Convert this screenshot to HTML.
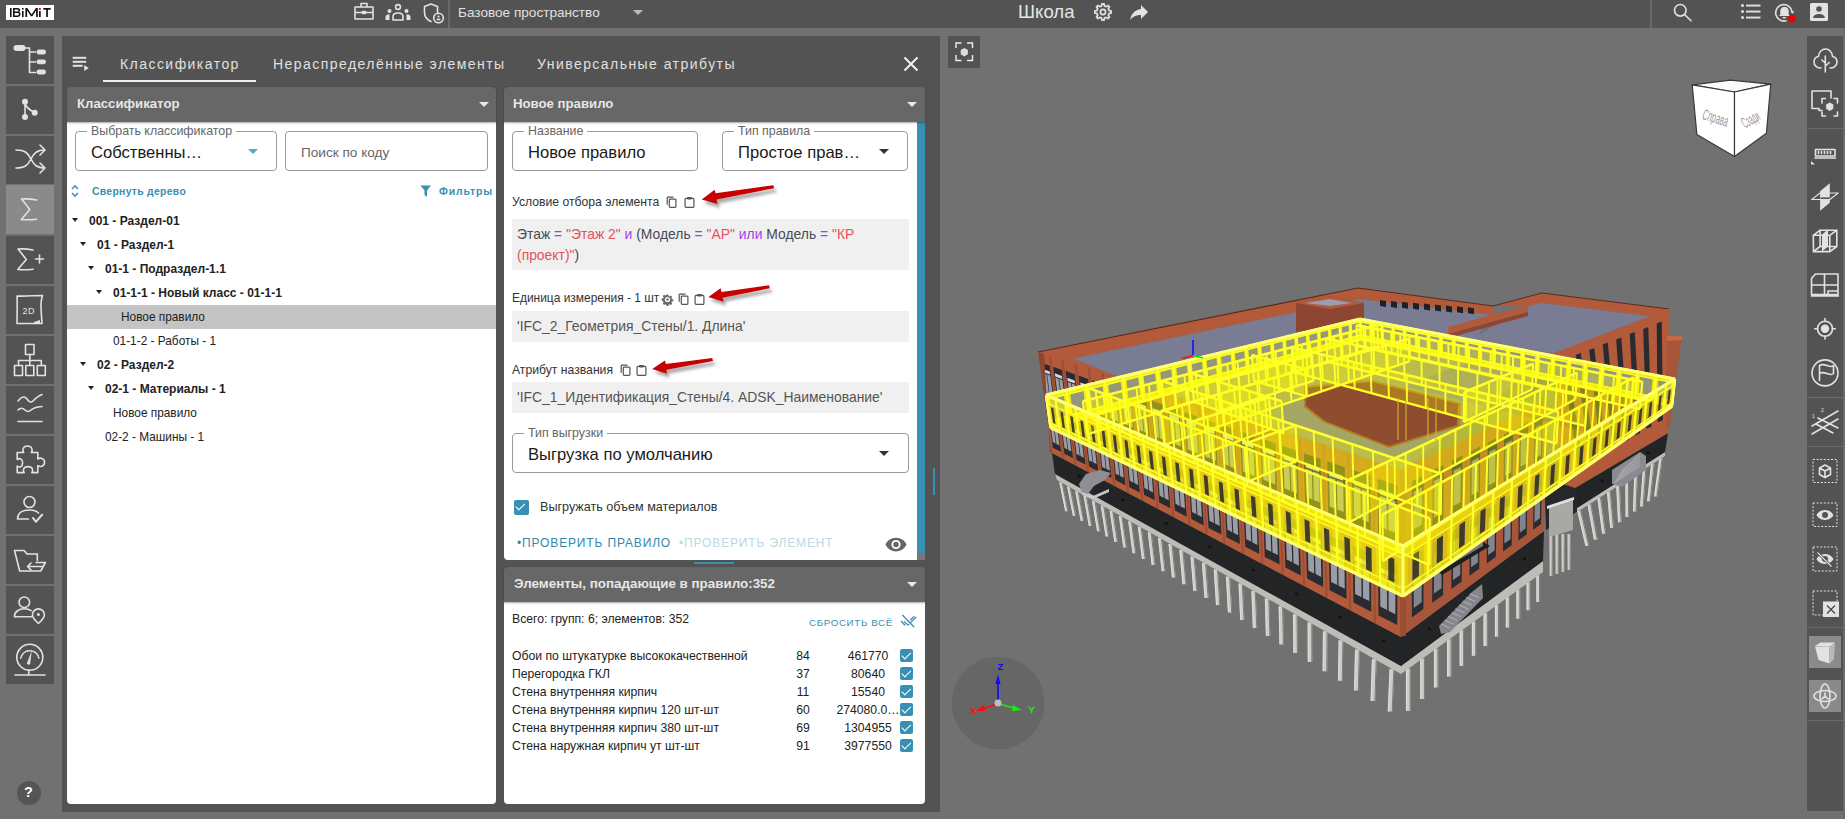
<!DOCTYPE html>
<html><head><meta charset="utf-8">
<style>
*{box-sizing:border-box;margin:0;padding:0}
html,body{width:1845px;height:819px;overflow:hidden;background:#717171;font-family:"Liberation Sans",sans-serif;position:relative}
.a{position:absolute}
.t{position:absolute;white-space:nowrap;line-height:1}
#top{left:0;top:0;width:1845px;height:28px;background:#535353}
.lb{position:absolute;left:6px;width:48px;height:48px;background:#535353}
.lb.sel{background:#8a8a8a}
#cont{left:62px;top:36px;width:878px;height:776px;background:#535353}
.ph{position:absolute;height:35px;background:#676767;border-radius:4px 4px 0 0;z-index:2;box-shadow:0 1px 2px rgba(0,0,0,0.35)}
.ph .t{color:#e6e6e6;font-weight:bold;font-size:13.2px}
.pb{position:absolute;background:#fff;border-radius:0 0 4px 4px}
.tab{color:#e0e0e0;font-size:14px;letter-spacing:1.45px}
svg{position:absolute;overflow:visible}
.ic{stroke:#e2e2e2;fill:none;stroke-width:1.6;stroke-linecap:round;stroke-linejoin:round}
.icf{fill:#e2e2e2;stroke:none}
.fld{position:absolute;border:1px solid #9a9a9a;border-radius:4px;background:#fff}
.lbl{position:absolute;background:#fff;color:#666;font-size:12.4px;line-height:1;padding:0 4px 0 4px;white-space:nowrap;margin-top:1px}
.val{position:absolute;color:#1a1a1a;font-size:16.6px;line-height:1;white-space:nowrap;margin-top:1px}
.tr{position:absolute;font-size:11.85px;color:#222;line-height:1;white-space:nowrap}
.tr.b{font-weight:bold;font-size:12px}
.arr{position:absolute;width:0;height:0;border-left:3.5px solid transparent;border-right:3.5px solid transparent;border-top:4px solid #222}
.lab{position:absolute;font-size:12.2px;color:#333;line-height:1;white-space:nowrap}
.code{position:absolute;background:#f0f0f0;left:512px;width:397px}
.ct{position:absolute;font-size:13.9px;color:#555;line-height:1;white-space:nowrap}
.row{position:absolute;font-size:12.2px;color:#222;line-height:1;white-space:nowrap}
.cb{position:absolute;width:13px;height:13px;background:#3a90b4;border-radius:2px}
.cb:after{content:"";position:absolute;left:4.2px;top:1.2px;width:3.6px;height:7.5px;border:solid #fff;border-width:0 1.8px 1.8px 0;transform:rotate(45deg)}
</style></head><body>
<!-- TOP BAR -->
<div id="top" class="a"></div>
<div class="a" style="left:6px;top:5px;width:48px;height:15px;background:#fff"></div>
<svg style="left:0;top:0" width="60" height="28">
  <g fill="#111">
    <rect x="10" y="8" width="1.6" height="9"/>
    <path d="M13 8h4.2c2 0 3 1 3 2.2 0 1-.6 1.6-1.4 1.9 1 .3 1.7 1 1.7 2.1 0 1.6-1.2 2.8-3.2 2.8H13zM14.6 9.4v2.2h2.4c.9 0 1.5-.4 1.5-1.1s-.6-1.1-1.5-1.1zM14.6 12.9v2.7h2.6c1 0 1.7-.5 1.7-1.35S18.2 12.9 17.2 12.9z"/>
    <rect x="22" y="11" width="1.6" height="6"/>
    <rect x="22" y="8" width="1.6" height="1.6"/>
    <path d="M25.4 17V8h1.9l4.3 6.6 4.3-6.6h1.9v9h-1.7v-6.4l-3.8 5.6h-1.4l-3.8-5.6V17z"/>
    <rect x="39" y="11" width="1.7" height="6"/>
    <rect x="43.3" y="8" width="7.4" height="1.7"/>
    <rect x="46.2" y="8" width="1.7" height="9"/>
  </g>
  <rect x="38.9" y="8" width="1.9" height="1.9" fill="#e00"/>
</svg>
<!-- briefcase -->
<svg style="left:354px;top:2px" width="20" height="18" viewBox="0 0 20 18">
  <path class="ic" d="M1 5h18v12H1zM1 10.5h18M7 5V1.5h6V5M8.5 9.5h3v2h-3z" stroke-width="1.5"/>
</svg>
<!-- people -->
<svg style="left:385px;top:3px" width="26" height="18" viewBox="0 0 26 18">
  <circle class="ic" cx="13" cy="4" r="2.4" stroke-width="1.5"/>
  <circle class="icf" cx="4.5" cy="8" r="2"/>
  <circle class="icf" cx="21.5" cy="8" r="2"/>
  <path class="ic" d="M8 17v-3.5c0-2 2-3.5 5-3.5s5 1.5 5 3.5V17z" stroke-width="1.6"/>
  <path class="icf" d="M0.5 17v-2.5c0-2 1.5-3.2 4-3.2v5.7zM25.5 17v-2.5c0-2-1.5-3.2-4-3.2v5.7z"/>
</svg>
<!-- shield -->
<svg style="left:423px;top:3px" width="22" height="21" viewBox="0 0 22 21">
  <path class="ic" d="M8 1L1.5 3.5v6c0 4 3 7.5 6.5 9M8 1l6.5 2.5v7" stroke-width="1.5"/>
  <circle class="ic" cx="15.5" cy="15" r="4.8" stroke-width="1.5"/>
  <circle class="icf" cx="15.5" cy="13.6" r="1.1"/>
  <path class="icf" d="M13.2 17.3c.3-1.2 1.2-1.8 2.3-1.8s2 .6 2.3 1.8z"/>
</svg>
<div class="a" style="left:448px;top:0;width:2px;height:28px;background:#6a6a6a"></div>
<div class="t" style="left:458px;top:6px;font-size:13.6px;color:#e0e0e0">Базовое пространство</div>
<div class="a" style="left:633px;top:10px;width:0;height:0;border-left:5px solid transparent;border-right:5px solid transparent;border-top:5px solid #bbb"></div>
<div class="t" style="left:1018px;top:3px;font-size:18.6px;color:#e6e6e6">Школа</div>
<!-- gear -->
<svg style="left:1093px;top:2px" width="20" height="20" viewBox="0 0 20 20">
  <path d="M16.15 8.63 L18.12 8.86 L18.12 11.14 L16.15 11.37 L15.32 13.38 L16.55 14.93 L14.93 16.55 L13.38 15.32 L11.37 16.15 L11.14 18.12 L8.86 18.12 L8.63 16.15 L6.62 15.32 L5.07 16.55 L3.45 14.93 L4.68 13.38 L3.85 11.37 L1.88 11.14 L1.88 8.86 L3.85 8.63 L4.68 6.62 L3.45 5.07 L5.07 3.45 L6.62 4.68 L8.63 3.85 L8.86 1.88 L11.14 1.88 L11.37 3.85 L13.38 4.68 L14.93 3.45 L16.55 5.07 L15.32 6.62Z" fill="none" stroke="#e2e2e2" stroke-width="1.7" stroke-linejoin="round"/>
  <circle cx="10" cy="10" r="2.6" fill="none" stroke="#e2e2e2" stroke-width="1.7"/>
</svg>
<!-- share -->
<svg style="left:1129px;top:4px" width="20" height="17" viewBox="0 0 20 17">
  <path fill="#e2e2e2" d="M12 1v4C5 6 2 11 1 16c2.5-3.5 6-5.1 11-5.1V15l7-7z"/>
</svg>
<div class="a" style="left:1650px;top:0;width:2px;height:28px;background:#6a6a6a"></div>
<!-- search -->
<svg style="left:1673px;top:3px" width="20" height="19" viewBox="0 0 20 19">
  <circle class="ic" cx="7.3" cy="7.3" r="5.8" stroke-width="1.9"/>
  <path class="ic" d="M11.5 11.5l6.5 6.3" stroke-width="2"/>
</svg>
<!-- list -->
<svg style="left:1741px;top:4px" width="20" height="16" viewBox="0 0 20 16">
  <circle class="icf" cx="1.5" cy="1.5" r="1.5"/><circle class="icf" cx="1.5" cy="7.5" r="1.5"/><circle class="icf" cx="1.5" cy="13.5" r="1.5"/>
  <rect class="icf" x="5" y="0.6" width="14.5" height="1.9"/><rect class="icf" x="5" y="6.6" width="14.5" height="1.9"/><rect class="icf" x="5" y="12.6" width="14.5" height="1.9"/>
</svg>
<!-- bell -->
<svg style="left:1774px;top:3px" width="22" height="20" viewBox="0 0 22 20">
  <path class="ic" d="M18 8.5A8.2 8.2 0 1 0 12 17.8" stroke-width="1.7"/>
  <path class="icf" d="M16.5 8.5h4l-2 2.3z"/>
  <path class="icf" d="M9.5 4c-2 .4-3.2 2-3.2 4v3.5l-1.3 1.5h11l-1.3-1.5V8c0-2-1.2-3.6-3.2-4zM8.5 14h3.5c0 1-.8 1.6-1.75 1.6S8.5 15 8.5 14z"/>
  <circle cx="18" cy="15.6" r="3.9" fill="#e00"/>
</svg>
<!-- person -->
<svg style="left:1810px;top:3px" width="18" height="18" viewBox="0 0 18 18">
  <rect x="0" y="0" width="18" height="18" rx="1.5" fill="#e2e2e2"/>
  <circle cx="9" cy="6" r="2.8" fill="#535353"/>
  <path d="M3.2 14.5c0-2.2 3-3.5 5.8-3.5s5.8 1.3 5.8 3.5V15H3.2z" fill="#535353"/>
</svg>

<!-- LEFT TOOLBAR -->
<div class="lb" style="top:36px"></div>
<div class="lb" style="top:86px"></div>
<div class="lb" style="top:136px"></div>
<div class="lb sel" style="top:185px;height:49px"></div>
<div class="lb" style="top:236px"></div>
<div class="lb" style="top:286px"></div>
<div class="lb" style="top:336px"></div>
<div class="lb" style="top:386px"></div>
<div class="lb" style="top:436px"></div>
<div class="lb" style="top:486px"></div>
<div class="lb" style="top:536px"></div>
<div class="lb" style="top:586px"></div>
<div class="lb" style="top:636px"></div>
<svg style="left:0;top:0" width="60" height="819">
  <!-- tree -->
  <rect class="icf" x="13.5" y="45" width="12" height="6" rx="3"/>
  <path class="ic" d="M25 48h4.5v24.5h6M29.5 52h6M29.5 62h6" stroke-width="1.6" stroke-linecap="butt"/>
  <rect class="icf" x="36.5" y="49.6" width="9.5" height="4.8" rx="2.4"/>
  <rect class="icf" x="36.5" y="59.4" width="9.5" height="4.8" rx="2.4"/>
  <rect class="icf" x="36.5" y="69.6" width="9.5" height="4.8" rx="2.4"/>
  <!-- branch -->
  <path class="ic" d="M25 102v15M25 103c1 5 5 7 9.7 9.8" stroke-width="1.8"/>
  <circle class="icf" cx="25" cy="101.8" r="3"/><circle class="icf" cx="25" cy="117" r="3"/><circle class="icf" cx="34.7" cy="112.8" r="3"/>
  <!-- shuffle -->
  <path class="ic" d="M16 150c9 0 12 3 15 9s6 9 14 9M16 168c9 0 12-3 15-9s6-9 14-9M40 145l5 5-5 5M40 163l5 5-5 5" stroke-width="1.6"/>
  <!-- sigma -->
  <path class="ic" d="M36.5 200c-5-1-10-1.3-15-1 3 3.5 6 7.5 8.3 10.5-3 3.5-5.5 6.5-8.5 10 5 .5 10 .3 15.3-.3" stroke-width="2.7"/>
  <!-- sigma+ -->
  <path class="ic" d="M33 250c-5-1-10-1.3-15-1 3 3.5 6 7.5 8.3 10.5-3 3.5-5.5 6.5-8.5 10 5 .5 10 .3 15.3-.3M35.5 259h8M39.5 255v8" stroke-width="2.6"/>
  <!-- 2D -->
  <path class="ic" d="M17 296c8 .5 17-.5 25.5-.5-1 3-1.5 6-1.5 9 0 6 .5 12 1 19H17c0-9 .5-18 0-27.5z" stroke-width="1.6"/>
  <path class="icf" d="M34 322l6-2v3h-6z"/>
  <text x="22.5" y="314" font-family="Liberation Sans" font-size="9" fill="#e2e2e2" letter-spacing="0.5">2D</text>
  <!-- hierarchy -->
  <rect class="ic" x="25.5" y="344.5" width="8.5" height="10" stroke-width="1.3"/>
  <rect class="ic" x="14.5" y="365.5" width="8" height="10" stroke-width="1.3"/>
  <rect class="ic" x="25.8" y="365.5" width="8" height="10" stroke-width="1.3"/>
  <rect class="ic" x="37.3" y="365.5" width="8" height="10" stroke-width="1.3"/>
  <path class="ic" d="M29.8 354.5v11M18.5 365.5v-5h22.8v5" stroke-width="1.3"/>
  <!-- chart -->
  <path class="ic" d="M18 401c4-5 7-5 9-2s4 4 6 2 5-5 9-6.5M18 410c3-3 5-2 7 0s4 2 6 0 6-3 11-3.5M18 421.5h24" stroke-width="1.7"/>
  <!-- puzzle -->
  <path class="ic" d="M17.2 452.5h6.5c-1.6-2.2-1.1-6.5 3.8-6.5s5.4 4.3 3.8 6.5h6.5v6.5c2.2-1.6 6.8-1.1 6.8 3.3s-4.6 4.9-6.8 3.3v7h-6c1.6-2.2 1.1-6-3.8-6s-5.4 3.8-3.8 6h-7v-6.5c2.2 1.6 5.4 1.1 5.4-3.3s-3.2-4.9-5.4-3.3z" stroke-width="1.6"/>
  <!-- person check -->
  <circle class="ic" cx="29.5" cy="502" r="5.5" stroke-width="1.6"/>
  <path class="ic" d="M17.5 519c0-6 5-9 12-9 4 0 7 1 9 3M17.5 519h11M33 518l3 3.5 6-7" stroke-width="1.6"/>
  <path class="ic" d="M33 518l3 4 6.5-7.5" stroke-width="2.2"/>
  <!-- folder -->
  <path class="ic" d="M14.5 550.5h9.5l3 3.5h10.3v6.5M14.5 550.5l5.2 20.5h21l4.7-8.5H36" stroke-width="1.5"/>
  <path class="ic" d="M42 566.5H27.5M31 563l-3.5 3.5 3.5 3.5" stroke-width="1.5"/>
  <!-- person pin -->
  <circle class="ic" cx="24.3" cy="602.3" r="5.3" stroke-width="1.5"/>
  <path class="ic" d="M14.4 616.8c0-4.8 4.2-8 9.9-8 2.6 0 5 .6 6.8 1.8M14.4 616.8h17" stroke-width="1.5"/>
  <path class="ic" d="M38.4 623.5c-3.6-3.4-6-6-6-8.6a6 6 0 0 1 12 0c0 2.6-2.4 5.2-6 8.6z" stroke-width="1.5"/>
  <circle class="icf" cx="38.4" cy="614.6" r="1.5"/>
  <!-- gauge -->
  <circle class="ic" cx="29.8" cy="657.3" r="13" stroke-width="1.6"/>
  <path class="ic" d="M20.8 658a9.2 9.2 0 0 1 18 0" stroke-width="0.9" stroke-dasharray="1 1.4"/>
  <path class="icf" d="M31.8 650.5l-5 13c.5 1.3 2.3 1.6 3.3.4z"/>
  <path class="ic" d="M15 675h30M28.8 670v5" stroke-width="1.7" stroke-linecap="butt"/>
</svg>
<div class="a" style="left:17px;top:781px;width:24px;height:24px;border-radius:12px;background:#555"></div>
<div class="t" style="left:24px;top:785px;font-size:14.5px;font-weight:bold;color:#fff">?</div>

<!-- PANEL CONTAINER -->
<div id="cont" class="a"></div>

<!-- tabs -->
<svg style="left:72px;top:56px" width="18" height="16" viewBox="0 0 18 16">
  <rect class="icf" x="0.7" y="0.8" width="13.5" height="2"/><rect class="icf" x="0.7" y="4.8" width="13.5" height="2"/><rect class="icf" x="0.7" y="8.8" width="10" height="2"/>
  <path class="icf" d="M12.2 9l4.6 3-4.6 3z"/>
</svg>
<div class="t tab" style="left:120px;top:57px">Классификатор</div>
<div class="a" style="left:103px;top:80px;width:153px;height:2px;background:#f0f0f0"></div>
<div class="t tab" style="left:273px;top:57px">Нераспределённые элементы</div>
<div class="t tab" style="left:537px;top:57px">Универсальные атрибуты</div>
<svg style="left:903px;top:56px" width="16" height="16" viewBox="0 0 16 16">
  <path d="M1.5 1.5l13 13M14.5 1.5l-13 13" stroke="#f0f0f0" stroke-width="2.1"/>
</svg>

<!-- LEFT PANEL -->
<div class="ph" style="left:67px;top:87px;width:429px"><div class="t" style="left:10px;top:10px">Классификатор</div>
  <div class="a" style="left:412px;top:15px;border-left:5px solid transparent;border-right:5px solid transparent;border-top:5px solid #e8e8e8"></div></div>
<div class="pb" style="left:67px;top:122px;width:429px;height:682px"></div>
<div class="fld" style="left:75px;top:131px;width:202px;height:40px"></div>
<div class="lbl" style="left:87px;top:124px">Выбрать классификатор</div>
<div class="val" style="left:91px;top:144px">Собственны…</div>
<div class="a" style="left:248px;top:149px;border-left:5px solid transparent;border-right:5px solid transparent;border-top:5px solid #56a9c9"></div>
<div class="fld" style="left:285px;top:131px;width:203px;height:40px"></div>
<div class="t" style="left:301px;top:146px;font-size:13.6px;color:#666">Поиск по коду</div>
<svg style="left:70px;top:184px" width="10" height="14" viewBox="0 0 10 14">
  <path d="M2 5l3-3 3 3M2 9l3 3 3-3" stroke="#3f95b8" stroke-width="1.6" fill="none"/>
</svg>
<div class="t" style="left:92px;top:187px;font-size:10.4px;color:#3a8fb2;letter-spacing:0.3px;font-weight:bold">Свернуть дерево</div>
<svg style="left:420px;top:185px" width="12" height="12" viewBox="0 0 12 12">
  <path d="M0.5 0.5h10.5L7 5.5V12L4.5 10V5.5z" fill="#3a8fb2"/>
</svg>
<div class="t" style="left:439px;top:187px;font-size:10.4px;color:#3a8fb2;letter-spacing:0.9px;font-weight:bold">Фильтры</div>

<!-- tree -->
<div class="arr" style="left:72px;top:218px"></div><div class="tr b" style="left:89px;top:215px">001 - Раздел-01</div>
<div class="arr" style="left:80px;top:242px"></div><div class="tr b" style="left:97px;top:239px">01 - Раздел-1</div>
<div class="arr" style="left:88px;top:266px"></div><div class="tr b" style="left:105px;top:263px">01-1 - Подраздел-1.1</div>
<div class="arr" style="left:96px;top:290px"></div><div class="tr b" style="left:113px;top:287px">01-1-1 - Новый класс - 01-1-1</div>
<div class="a" style="left:67px;top:305px;width:429px;height:24px;background:#c4c4c4"></div>
<div class="tr" style="left:121px;top:312px">Новое правило</div>
<div class="tr" style="left:113px;top:336px">01-1-2 - Работы - 1</div>
<div class="arr" style="left:80px;top:362px"></div><div class="tr b" style="left:97px;top:359px">02 - Раздел-2</div>
<div class="arr" style="left:88px;top:386px"></div><div class="tr b" style="left:105px;top:383px">02-1 - Материалы - 1</div>
<div class="tr" style="left:113px;top:408px">Новое правило</div>
<div class="tr" style="left:105px;top:432px">02-2 - Машины - 1</div>

<!-- MIDDLE TOP PANEL -->
<div class="ph" style="left:504px;top:87px;width:421px"><div class="t" style="left:9px;top:10px">Новое правило</div>
  <div class="a" style="left:403px;top:15px;border-left:5px solid transparent;border-right:5px solid transparent;border-top:5px solid #e8e8e8"></div></div>
<div class="pb" style="left:504px;top:122px;width:421px;height:438px"></div>
<div class="a" style="left:917px;top:122px;width:8px;height:432px;background:#3a90b4"></div>
<div class="a" style="left:917px;top:554px;width:8px;height:6px;background:#777"></div>

<div class="fld" style="left:512px;top:131px;width:186px;height:40px"></div>
<div class="lbl" style="left:524px;top:124px">Название</div>
<div class="val" style="left:528px;top:144px">Новое правило</div>
<div class="fld" style="left:722px;top:131px;width:186px;height:40px"></div>
<div class="lbl" style="left:734px;top:124px">Тип правила</div>
<div class="val" style="left:738px;top:144px">Простое прав…</div>
<div class="a" style="left:879px;top:149px;border-left:5px solid transparent;border-right:5px solid transparent;border-top:5px solid #333"></div>

<div class="lab" style="left:512px;top:196px">Условие отбора элемента</div>
<svg style="left:666px;top:196px" width="12" height="12" viewBox="0 0 12 12">
  <path d="M1.2 8.8V1.8c0-.4.3-.7.7-.7h5.6" stroke="#555" stroke-width="1.2" fill="none"/><rect x="3.3" y="3.2" width="6.6" height="8.2" rx="0.8" stroke="#555" stroke-width="1.2" fill="#fff"/>
</svg>
<svg style="left:684px;top:196px" width="11" height="12" viewBox="0 0 11 12">
  <rect x="1.1" y="2.4" width="8.8" height="9" rx="1" stroke="#555" stroke-width="1.2" fill="none"/><rect x="3.2" y="1" width="4.6" height="2.6" rx="0.6" fill="#555"/>
</svg>
<div class="code" style="top:219px;height:51px"></div>
<div class="ct" style="left:517px;top:228px"><span style="color:#4a4a52">Этаж</span> <span style="color:#a540e0">=</span> <span style="color:#e8505a">"Этаж 2"</span> <span style="color:#a540e0">и</span> <span style="color:#4a4a52">(Модель</span> <span style="color:#a540e0">=</span> <span style="color:#e8505a">"АР"</span> <span style="color:#a540e0">или</span> <span style="color:#4a4a52">Модель</span> <span style="color:#a540e0">=</span> <span style="color:#e8505a">"КР</span></div>
<div class="ct" style="left:517px;top:249px"><span style="color:#e8505a">(проект)"</span><span style="color:#4a4a52">)</span></div>

<div class="lab" style="left:512px;top:293px;font-size:11.95px">Единица измерения - 1 шт</div>
<svg style="left:662px;top:294px" width="11" height="11" viewBox="0 0 11 11">
  <path fill="#6a6a6a" d="M4.6.5h1.8l.3 1.4 1 .5 1.2-.8 1.3 1.3-.8 1.2.5 1 1.4.3v1.8l-1.4.3-.5 1 .8 1.2-1.3 1.3-1.2-.8-1 .5-.3 1.4H4.6l-.3-1.4-1-.5-1.2.8-1.3-1.3.8-1.2-.5-1L-.3 6.4V4.6l1.4-.3.5-1-.8-1.2L2.1.8l1.2.8 1-.5z"/>
  <circle cx="5.5" cy="5.5" r="2.6" fill="#fff"/><circle cx="5.5" cy="5.5" r="1.2" fill="#6a6a6a"/>
</svg>
<svg style="left:678px;top:293px" width="12" height="12" viewBox="0 0 12 12">
  <path d="M1.2 8.8V1.8c0-.4.3-.7.7-.7h5.6" stroke="#555" stroke-width="1.2" fill="none"/><rect x="3.3" y="3.2" width="6.6" height="8.2" rx="0.8" stroke="#555" stroke-width="1.2" fill="#fff"/>
</svg>
<svg style="left:694px;top:293px" width="11" height="12" viewBox="0 0 11 12">
  <rect x="1.1" y="2.4" width="8.8" height="9" rx="1" stroke="#555" stroke-width="1.2" fill="none"/><rect x="3.2" y="1" width="4.6" height="2.6" rx="0.6" fill="#555"/>
</svg>
<div class="code" style="top:311px;height:31px"></div>
<div class="ct" style="left:517px;top:320px">'IFC_2_Геометрия_Стены/1. Длина'</div>

<div class="lab" style="left:512px;top:364px">Атрибут названия</div>
<svg style="left:620px;top:364px" width="12" height="12" viewBox="0 0 12 12">
  <path d="M1.2 8.8V1.8c0-.4.3-.7.7-.7h5.6" stroke="#555" stroke-width="1.2" fill="none"/><rect x="3.3" y="3.2" width="6.6" height="8.2" rx="0.8" stroke="#555" stroke-width="1.2" fill="#fff"/>
</svg>
<svg style="left:636px;top:364px" width="11" height="12" viewBox="0 0 11 12">
  <rect x="1.1" y="2.4" width="8.8" height="9" rx="1" stroke="#555" stroke-width="1.2" fill="none"/><rect x="3.2" y="1" width="4.6" height="2.6" rx="0.6" fill="#555"/>
</svg>
<div class="code" style="top:382px;height:31px"></div>
<div class="ct" style="left:517px;top:391px">'IFC_1_Идентификация_Стены/4. ADSK_Наименование'</div>

<div class="fld" style="left:512px;top:433px;width:397px;height:40px"></div>
<div class="lbl" style="left:524px;top:426px">Тип выгрузки</div>
<div class="val" style="left:528px;top:446px">Выгрузка по умолчанию</div>
<div class="a" style="left:879px;top:451px;border-left:5px solid transparent;border-right:5px solid transparent;border-top:5px solid #333"></div>

<div class="cb" style="left:514px;top:500px;width:15px;height:15px"></div>
<div class="lab" style="left:540px;top:501px;font-size:12.6px">Выгружать объем материалов</div>
<div class="t" style="left:517px;top:537px;font-size:12px;color:#3588ab;letter-spacing:0.85px">•ПРОВЕРИТЬ ПРАВИЛО</div>
<div class="t" style="left:679px;top:537px;font-size:12px;color:#bcd8e3;letter-spacing:0.85px">•ПРОВЕРИТЬ ЭЛЕМЕНТ</div>
<svg style="left:885px;top:537px" width="22" height="15" viewBox="0 0 24 16">
  <path fill="#666" d="M12 0.5C6.5 0.5 2 4 0.5 8 2 12 6.5 15.5 12 15.5S22 12 23.5 8C22 4 17.5 0.5 12 0.5zM12 13a5 5 0 1 1 0-10 5 5 0 0 1 0 10zm0-8a3 3 0 1 0 0 6 3 3 0 0 0 0-6z"/>
</svg>
<div class="a" style="left:694px;top:562px;width:40px;height:2px;background:#3a90b4"></div>
<div class="a" style="left:933px;top:468px;width:2px;height:27px;background:#3a90b4"></div>

<!-- MIDDLE BOTTOM PANEL -->
<div class="ph" style="left:504px;top:567px;width:421px"><div class="t" style="left:10px;top:10px"><span style="font-size:13.4px">Элементы, попадающие в правило:352</span></div>
  <div class="a" style="left:403px;top:15px;border-left:5px solid transparent;border-right:5px solid transparent;border-top:5px solid #e8e8e8"></div></div>
<div class="pb" style="left:504px;top:602px;width:421px;height:202px"></div>
<div class="row" style="left:512px;top:613px">Всего: групп: 6; элементов: 352</div>
<div class="t" style="left:809px;top:617.5px;font-size:9.8px;color:#3a8fb2;letter-spacing:0.62px">СБРОСИТЬ ВСЁ</div>
<svg style="left:900px;top:614px" width="17" height="14" viewBox="0 0 17 14">
  <path d="M2.6 1.2l11.2 11.5M1.3 7.3l3.4 3.7M4.2 7.6l3.3 3.2M8.4 10.6l7.5-7.4M10.5 5.8l3.3-3" stroke="#3a8fb2" stroke-width="1.3" fill="none" stroke-linecap="round"/>
</svg>
<div class="row" style="left:512px;top:650px">Обои по штукатурке высококачественной</div>
<div class="row" style="left:512px;top:668px">Перегородка ГКЛ</div>
<div class="row" style="left:512px;top:686px">Стена внутренняя кирпич</div>
<div class="row" style="left:512px;top:704px">Стена внутренняя кирпич 120 шт-шт</div>
<div class="row" style="left:512px;top:722px">Стена внутренняя кирпич 380 шт-шт</div>
<div class="row" style="left:512px;top:740px">Стена наружная кирпич ут шт-шт</div>
<div class="row" style="left:783px;top:650px;width:40px;text-align:center">84</div>
<div class="row" style="left:783px;top:668px;width:40px;text-align:center">37</div>
<div class="row" style="left:783px;top:686px;width:40px;text-align:center">11</div>
<div class="row" style="left:783px;top:704px;width:40px;text-align:center">60</div>
<div class="row" style="left:783px;top:722px;width:40px;text-align:center">69</div>
<div class="row" style="left:783px;top:740px;width:40px;text-align:center">91</div>
<div class="row" style="left:828px;top:650px;width:80px;text-align:center">461770</div>
<div class="row" style="left:828px;top:668px;width:80px;text-align:center">80640</div>
<div class="row" style="left:828px;top:686px;width:80px;text-align:center">15540</div>
<div class="row" style="left:828px;top:704px;width:80px;text-align:center">274080.0…</div>
<div class="row" style="left:828px;top:722px;width:80px;text-align:center">1304955</div>
<div class="row" style="left:828px;top:740px;width:80px;text-align:center">3977550</div>
<div class="cb" style="left:900px;top:649px"></div>
<div class="cb" style="left:900px;top:667px"></div>
<div class="cb" style="left:900px;top:685px"></div>
<div class="cb" style="left:900px;top:703px"></div>
<div class="cb" style="left:900px;top:721px"></div>
<div class="cb" style="left:900px;top:739px"></div>

<!-- VIEWPORT -->
<!--BUILDING-->
<svg style="left:0;top:0" width="1845" height="819"><polygon points="1059.4,482.2 1062.4,482.2 1068.3,511.3 1065.3,511.3" fill="#cdcdc8" /><line x1="1062.0" y1="482.2" x2="1067.9" y2="511.3" stroke="#7c7c78" stroke-width="1.0" /><line x1="1059.8" y1="482.2" x2="1065.7" y2="511.3" stroke="#e8e8e4" stroke-width="0.7" /><polygon points="1067.2,486.6 1070.3,486.6 1076.1,516.1 1073.0,516.1" fill="#cdcdc8" /><line x1="1069.9" y1="486.6" x2="1075.7" y2="516.1" stroke="#7c7c78" stroke-width="1.0" /><line x1="1067.6" y1="486.6" x2="1073.4" y2="516.1" stroke="#e8e8e4" stroke-width="0.7" /><polygon points="1075.3,491.2 1078.5,491.2 1084.0,521.0 1080.8,521.0" fill="#cdcdc8" /><line x1="1078.1" y1="491.2" x2="1083.6" y2="521.0" stroke="#7c7c78" stroke-width="1.0" /><line x1="1075.7" y1="491.2" x2="1081.2" y2="521.0" stroke="#e8e8e4" stroke-width="0.7" /><polygon points="1083.6,495.9 1086.8,495.9 1092.1,526.0 1088.9,526.0" fill="#cdcdc8" /><line x1="1086.4" y1="495.9" x2="1091.7" y2="526.0" stroke="#7c7c78" stroke-width="1.0" /><line x1="1084.0" y1="495.9" x2="1089.3" y2="526.0" stroke="#e8e8e4" stroke-width="0.7" /><polygon points="1092.0,500.7 1095.3,500.7 1100.5,531.2 1097.2,531.2" fill="#cdcdc8" /><line x1="1094.9" y1="500.7" x2="1100.1" y2="531.2" stroke="#7c7c78" stroke-width="1.0" /><line x1="1092.4" y1="500.7" x2="1097.6" y2="531.2" stroke="#e8e8e4" stroke-width="0.7" /><polygon points="1100.8,505.6 1104.1,505.6 1109.0,536.5 1105.7,536.5" fill="#cdcdc8" /><line x1="1103.7" y1="505.6" x2="1108.6" y2="536.5" stroke="#7c7c78" stroke-width="1.0" /><line x1="1101.2" y1="505.6" x2="1106.1" y2="536.5" stroke="#e8e8e4" stroke-width="0.7" /><polygon points="1109.7,510.7 1113.1,510.7 1117.8,541.9 1114.4,541.9" fill="#cdcdc8" /><line x1="1112.7" y1="510.7" x2="1117.4" y2="541.9" stroke="#7c7c78" stroke-width="1.0" /><line x1="1110.1" y1="510.7" x2="1114.8" y2="541.9" stroke="#e8e8e4" stroke-width="0.7" /><polygon points="1118.9,515.9 1122.3,515.9 1126.8,547.4 1123.4,547.4" fill="#cdcdc8" /><line x1="1121.9" y1="515.9" x2="1126.4" y2="547.4" stroke="#7c7c78" stroke-width="1.0" /><line x1="1119.3" y1="515.9" x2="1123.8" y2="547.4" stroke="#e8e8e4" stroke-width="0.7" /><polygon points="1128.3,521.2 1131.8,521.2 1136.1,553.2 1132.6,553.2" fill="#cdcdc8" /><line x1="1131.4" y1="521.2" x2="1135.7" y2="553.2" stroke="#7c7c78" stroke-width="1.0" /><line x1="1128.7" y1="521.2" x2="1133.0" y2="553.2" stroke="#e8e8e4" stroke-width="0.7" /><polygon points="1137.9,526.7 1141.5,526.7 1145.6,559.0 1142.0,559.0" fill="#cdcdc8" /><line x1="1141.1" y1="526.7" x2="1145.2" y2="559.0" stroke="#7c7c78" stroke-width="1.0" /><line x1="1138.3" y1="526.7" x2="1142.4" y2="559.0" stroke="#e8e8e4" stroke-width="0.7" /><polygon points="1147.9,532.3 1151.5,532.3 1155.4,565.1 1151.7,565.1" fill="#cdcdc8" /><line x1="1151.1" y1="532.3" x2="1155.0" y2="565.1" stroke="#7c7c78" stroke-width="1.0" /><line x1="1148.3" y1="532.3" x2="1152.1" y2="565.1" stroke="#e8e8e4" stroke-width="0.7" /><polygon points="1158.1,538.1 1161.8,538.1 1165.4,571.3 1161.7,571.3" fill="#cdcdc8" /><line x1="1161.4" y1="538.1" x2="1165.0" y2="571.3" stroke="#7c7c78" stroke-width="1.0" /><line x1="1158.5" y1="538.1" x2="1162.1" y2="571.3" stroke="#e8e8e4" stroke-width="0.7" /><polygon points="1168.6,544.0 1172.4,544.0 1175.8,577.6 1172.0,577.6" fill="#cdcdc8" /><line x1="1172.0" y1="544.0" x2="1175.4" y2="577.6" stroke="#7c7c78" stroke-width="1.0" /><line x1="1169.0" y1="544.0" x2="1172.4" y2="577.6" stroke="#e8e8e4" stroke-width="0.7" /><polygon points="1179.4,550.1 1183.3,550.1 1186.4,584.2 1182.5,584.2" fill="#cdcdc8" /><line x1="1182.9" y1="550.1" x2="1186.0" y2="584.2" stroke="#7c7c78" stroke-width="1.0" /><line x1="1179.8" y1="550.1" x2="1182.9" y2="584.2" stroke="#e8e8e4" stroke-width="0.7" /><polygon points="1190.6,556.4 1194.5,556.4 1197.3,590.9 1193.4,590.9" fill="#cdcdc8" /><line x1="1194.1" y1="556.4" x2="1196.9" y2="590.9" stroke="#7c7c78" stroke-width="1.0" /><line x1="1191.0" y1="556.4" x2="1193.8" y2="590.9" stroke="#e8e8e4" stroke-width="0.7" /><polygon points="1202.0,562.9 1206.0,562.9 1208.6,597.9 1204.6,597.9" fill="#cdcdc8" /><line x1="1205.6" y1="562.9" x2="1208.2" y2="597.9" stroke="#7c7c78" stroke-width="1.0" /><line x1="1202.4" y1="562.9" x2="1205.0" y2="597.9" stroke="#e8e8e4" stroke-width="0.7" /><polygon points="1213.8,569.6 1217.9,569.6 1220.2,605.1 1216.1,605.1" fill="#cdcdc8" /><line x1="1217.5" y1="569.6" x2="1219.8" y2="605.1" stroke="#7c7c78" stroke-width="1.0" /><line x1="1214.2" y1="569.6" x2="1216.5" y2="605.1" stroke="#e8e8e4" stroke-width="0.7" /><polygon points="1226.0,576.5 1230.1,576.5 1232.1,612.4 1228.0,612.4" fill="#cdcdc8" /><line x1="1229.7" y1="576.5" x2="1231.7" y2="612.4" stroke="#7c7c78" stroke-width="1.0" /><line x1="1226.4" y1="576.5" x2="1228.4" y2="612.4" stroke="#e8e8e4" stroke-width="0.7" /><polygon points="1238.6,583.6 1242.7,583.6 1244.4,620.0 1240.3,620.0" fill="#cdcdc8" /><line x1="1242.3" y1="583.6" x2="1244.0" y2="620.0" stroke="#7c7c78" stroke-width="1.0" /><line x1="1239.0" y1="583.6" x2="1240.7" y2="620.0" stroke="#e8e8e4" stroke-width="0.7" /><polygon points="1251.5,590.9 1255.7,590.9 1257.2,627.9 1252.9,627.9" fill="#cdcdc8" /><line x1="1255.3" y1="590.9" x2="1256.8" y2="627.9" stroke="#7c7c78" stroke-width="1.0" /><line x1="1251.9" y1="590.9" x2="1253.3" y2="627.9" stroke="#e8e8e4" stroke-width="0.7" /><polygon points="1264.9,598.4 1269.2,598.4 1270.3,636.0 1266.0,636.0" fill="#cdcdc8" /><line x1="1268.8" y1="598.4" x2="1269.9" y2="636.0" stroke="#7c7c78" stroke-width="1.0" /><line x1="1265.3" y1="598.4" x2="1266.4" y2="636.0" stroke="#e8e8e4" stroke-width="0.7" /><polygon points="1278.7,606.2 1283.0,606.2 1283.8,644.4 1279.5,644.4" fill="#cdcdc8" /><line x1="1282.6" y1="606.2" x2="1283.4" y2="644.4" stroke="#7c7c78" stroke-width="1.0" /><line x1="1279.1" y1="606.2" x2="1279.9" y2="644.4" stroke="#e8e8e4" stroke-width="0.7" /><polygon points="1293.0,614.3 1297.4,614.3 1297.8,653.0 1293.4,653.0" fill="#cdcdc8" /><line x1="1297.0" y1="614.3" x2="1297.4" y2="653.0" stroke="#7c7c78" stroke-width="1.0" /><line x1="1293.4" y1="614.3" x2="1293.8" y2="653.0" stroke="#e8e8e4" stroke-width="0.7" /><polygon points="1307.7,622.6 1312.2,622.6 1312.3,661.9 1307.8,661.9" fill="#cdcdc8" /><line x1="1311.8" y1="622.6" x2="1311.9" y2="661.9" stroke="#7c7c78" stroke-width="1.0" /><line x1="1308.1" y1="622.6" x2="1308.2" y2="661.9" stroke="#e8e8e4" stroke-width="0.7" /><polygon points="1323.0,631.3 1327.5,631.3 1327.2,671.2 1322.7,671.2" fill="#cdcdc8" /><line x1="1327.1" y1="631.3" x2="1326.8" y2="671.2" stroke="#7c7c78" stroke-width="1.0" /><line x1="1323.4" y1="631.3" x2="1323.1" y2="671.2" stroke="#e8e8e4" stroke-width="0.7" /><polygon points="1338.7,640.2 1343.3,640.2 1342.7,680.7 1338.1,680.7" fill="#cdcdc8" /><line x1="1342.9" y1="640.2" x2="1342.3" y2="680.7" stroke="#7c7c78" stroke-width="1.0" /><line x1="1339.1" y1="640.2" x2="1338.5" y2="680.7" stroke="#e8e8e4" stroke-width="0.7" /><polygon points="1355.1,649.4 1359.7,649.4 1358.7,690.6 1354.1,690.6" fill="#cdcdc8" /><line x1="1359.3" y1="649.4" x2="1358.3" y2="690.6" stroke="#7c7c78" stroke-width="1.0" /><line x1="1355.5" y1="649.4" x2="1354.5" y2="690.6" stroke="#e8e8e4" stroke-width="0.7" /><polygon points="1372.0,659.0 1376.7,659.0 1375.3,700.9 1370.6,700.9" fill="#cdcdc8" /><line x1="1376.3" y1="659.0" x2="1374.9" y2="700.9" stroke="#7c7c78" stroke-width="1.0" /><line x1="1372.4" y1="659.0" x2="1371.0" y2="700.9" stroke="#e8e8e4" stroke-width="0.7" /><polygon points="1389.6,668.9 1394.3,668.9 1392.6,711.5 1387.8,711.5" fill="#cdcdc8" /><line x1="1393.9" y1="668.9" x2="1392.2" y2="711.5" stroke="#7c7c78" stroke-width="1.0" /><line x1="1390.0" y1="668.9" x2="1388.2" y2="711.5" stroke="#e8e8e4" stroke-width="0.7" /><polygon points="1406.0,668.7 1410.6,668.7 1410.6,710.9 1406.0,710.9" fill="#cdcdc8" /><line x1="1410.2" y1="668.7" x2="1410.2" y2="710.9" stroke="#7c7c78" stroke-width="1.0" /><line x1="1406.4" y1="668.7" x2="1406.4" y2="710.9" stroke="#e8e8e4" stroke-width="0.7" /><polygon points="1420.3,658.5 1424.8,658.5 1424.8,699.0 1420.3,699.0" fill="#cdcdc8" /><line x1="1424.4" y1="658.5" x2="1424.4" y2="699.0" stroke="#7c7c78" stroke-width="1.0" /><line x1="1420.7" y1="658.5" x2="1420.7" y2="699.0" stroke="#e8e8e4" stroke-width="0.7" /><polygon points="1434.0,648.8 1438.3,648.8 1438.3,687.5 1434.0,687.5" fill="#cdcdc8" /><line x1="1437.9" y1="648.8" x2="1437.9" y2="687.5" stroke="#7c7c78" stroke-width="1.0" /><line x1="1434.4" y1="648.8" x2="1434.4" y2="687.5" stroke="#e8e8e4" stroke-width="0.7" /><polygon points="1447.1,639.3 1451.4,639.3 1451.4,676.6 1447.1,676.6" fill="#cdcdc8" /><line x1="1451.0" y1="639.3" x2="1451.0" y2="676.6" stroke="#7c7c78" stroke-width="1.0" /><line x1="1447.5" y1="639.3" x2="1447.5" y2="676.6" stroke="#e8e8e4" stroke-width="0.7" /><polygon points="1459.7,630.3 1464.0,630.3 1464.0,666.0 1459.7,666.0" fill="#cdcdc8" /><line x1="1463.6" y1="630.3" x2="1463.6" y2="666.0" stroke="#7c7c78" stroke-width="1.0" /><line x1="1460.1" y1="630.3" x2="1460.1" y2="666.0" stroke="#e8e8e4" stroke-width="0.7" /><polygon points="1471.9,621.6 1476.1,621.6 1476.1,655.8 1471.9,655.8" fill="#cdcdc8" /><line x1="1475.7" y1="621.6" x2="1475.7" y2="655.8" stroke="#7c7c78" stroke-width="1.0" /><line x1="1472.3" y1="621.6" x2="1472.3" y2="655.8" stroke="#e8e8e4" stroke-width="0.7" /><polygon points="1483.6,613.2 1487.7,613.2 1487.7,646.0 1483.6,646.0" fill="#cdcdc8" /><line x1="1487.3" y1="613.2" x2="1487.3" y2="646.0" stroke="#7c7c78" stroke-width="1.0" /><line x1="1484.0" y1="613.2" x2="1484.0" y2="646.0" stroke="#e8e8e4" stroke-width="0.7" /><polygon points="1495.0,605.1 1498.9,605.1 1498.9,636.6 1495.0,636.6" fill="#cdcdc8" /><line x1="1498.5" y1="605.1" x2="1498.5" y2="636.6" stroke="#7c7c78" stroke-width="1.0" /><line x1="1495.4" y1="605.1" x2="1495.4" y2="636.6" stroke="#e8e8e4" stroke-width="0.7" /><polygon points="1505.9,597.3 1509.8,597.3 1509.8,627.5 1505.9,627.5" fill="#cdcdc8" /><line x1="1509.4" y1="597.3" x2="1509.4" y2="627.5" stroke="#7c7c78" stroke-width="1.0" /><line x1="1506.3" y1="597.3" x2="1506.3" y2="627.5" stroke="#e8e8e4" stroke-width="0.7" /><polygon points="1516.4,589.7 1520.2,589.7 1520.2,618.7 1516.4,618.7" fill="#cdcdc8" /><line x1="1519.8" y1="589.7" x2="1519.8" y2="618.7" stroke="#7c7c78" stroke-width="1.0" /><line x1="1516.8" y1="589.7" x2="1516.8" y2="618.7" stroke="#e8e8e4" stroke-width="0.7" /><polygon points="1526.6,582.5 1530.3,582.5 1530.3,610.2 1526.6,610.2" fill="#cdcdc8" /><line x1="1529.9" y1="582.5" x2="1529.9" y2="610.2" stroke="#7c7c78" stroke-width="1.0" /><line x1="1527.0" y1="582.5" x2="1527.0" y2="610.2" stroke="#e8e8e4" stroke-width="0.7" /><polygon points="1536.4,575.4 1540.0,575.4 1540.0,602.0 1536.4,602.0" fill="#cdcdc8" /><line x1="1539.6" y1="575.4" x2="1539.6" y2="602.0" stroke="#7c7c78" stroke-width="1.0" /><line x1="1536.8" y1="575.4" x2="1536.8" y2="602.0" stroke="#e8e8e4" stroke-width="0.7" /><polygon points="1577.3,510.7 1581.1,510.7 1589.2,545.9 1585.5,545.9" fill="#cdcdc8" /><line x1="1580.7" y1="510.7" x2="1588.8" y2="545.9" stroke="#7c7c78" stroke-width="1.0" /><line x1="1577.7" y1="510.7" x2="1585.9" y2="545.9" stroke="#e8e8e4" stroke-width="0.7" /><polygon points="1587.5,504.2 1591.2,504.2 1597.7,539.7 1594.0,539.7" fill="#cdcdc8" /><line x1="1590.8" y1="504.2" x2="1597.3" y2="539.7" stroke="#7c7c78" stroke-width="1.0" /><line x1="1587.9" y1="504.2" x2="1594.4" y2="539.7" stroke="#e8e8e4" stroke-width="0.7" /><polygon points="1597.4,497.9 1601.0,497.9 1605.9,533.8 1602.2,533.8" fill="#cdcdc8" /><line x1="1600.6" y1="497.9" x2="1605.5" y2="533.8" stroke="#7c7c78" stroke-width="1.0" /><line x1="1597.8" y1="497.9" x2="1602.6" y2="533.8" stroke="#e8e8e4" stroke-width="0.7" /><polygon points="1607.0,491.8 1610.6,491.8 1613.9,528.0 1610.3,528.0" fill="#cdcdc8" /><line x1="1610.2" y1="491.8" x2="1613.5" y2="528.0" stroke="#7c7c78" stroke-width="1.0" /><line x1="1607.4" y1="491.8" x2="1610.7" y2="528.0" stroke="#e8e8e4" stroke-width="0.7" /><polygon points="1616.3,485.9 1619.9,485.9 1621.6,522.3 1618.1,522.3" fill="#cdcdc8" /><line x1="1619.5" y1="485.9" x2="1621.2" y2="522.3" stroke="#7c7c78" stroke-width="1.0" /><line x1="1616.7" y1="485.9" x2="1618.5" y2="522.3" stroke="#e8e8e4" stroke-width="0.7" /><polygon points="1625.4,480.1 1628.9,480.1 1629.1,516.9 1625.7,516.9" fill="#cdcdc8" /><line x1="1628.5" y1="480.1" x2="1628.7" y2="516.9" stroke="#7c7c78" stroke-width="1.0" /><line x1="1625.8" y1="480.1" x2="1626.1" y2="516.9" stroke="#e8e8e4" stroke-width="0.7" /><polygon points="1634.3,474.5 1637.7,474.5 1636.5,511.5 1633.1,511.5" fill="#cdcdc8" /><line x1="1637.3" y1="474.5" x2="1636.1" y2="511.5" stroke="#7c7c78" stroke-width="1.0" /><line x1="1634.7" y1="474.5" x2="1633.5" y2="511.5" stroke="#e8e8e4" stroke-width="0.7" /><polygon points="1642.9,469.0 1646.2,469.0 1643.6,506.4 1640.2,506.4" fill="#cdcdc8" /><line x1="1645.8" y1="469.0" x2="1643.2" y2="506.4" stroke="#7c7c78" stroke-width="1.0" /><line x1="1643.3" y1="469.0" x2="1640.6" y2="506.4" stroke="#e8e8e4" stroke-width="0.7" /><polygon points="1651.2,463.7 1654.5,463.7 1650.5,501.3 1647.2,501.3" fill="#cdcdc8" /><line x1="1654.1" y1="463.7" x2="1650.1" y2="501.3" stroke="#7c7c78" stroke-width="1.0" /><line x1="1651.6" y1="463.7" x2="1647.6" y2="501.3" stroke="#e8e8e4" stroke-width="0.7" /><polygon points="1659.4,458.5 1662.6,458.5 1657.3,496.4 1654.1,496.4" fill="#cdcdc8" /><line x1="1662.2" y1="458.5" x2="1656.9" y2="496.4" stroke="#7c7c78" stroke-width="1.0" /><line x1="1659.8" y1="458.5" x2="1654.5" y2="496.4" stroke="#e8e8e4" stroke-width="0.7" /><polygon points="1549.4,534.0 1552.6,534.0 1552.4,576.0 1549.6,576.0" fill="#cdcdc8" /><line x1="1552.3" y1="534.0" x2="1552.1" y2="576.0" stroke="#7c7c78" stroke-width="0.8" /><polygon points="1555.4,534.0 1558.6,534.0 1558.4,574.0 1555.6,574.0" fill="#cdcdc8" /><line x1="1558.3" y1="534.0" x2="1558.1" y2="574.0" stroke="#7c7c78" stroke-width="0.8" /><polygon points="1561.4,534.0 1564.6,534.0 1564.4,572.0 1561.6,572.0" fill="#cdcdc8" /><line x1="1564.3" y1="534.0" x2="1564.1" y2="572.0" stroke="#7c7c78" stroke-width="0.8" /><polygon points="1567.4,534.0 1570.6,534.0 1570.4,570.0 1567.6,570.0" fill="#cdcdc8" /><line x1="1570.3" y1="534.0" x2="1570.1" y2="570.0" stroke="#7c7c78" stroke-width="0.8" /><polygon points="1055.0,474.0 1401.0,666.0 1401.0,674.0 1057.0,480.0" fill="#bdbdb8" /><polygon points="1052.0,453.0 1401.0,637.0 1401.0,666.0 1055.0,474.0" fill="#222426" /><polygon points="1401.0,666.0 1543.0,561.0 1543.0,572.0 1401.0,674.0" fill="#bdbdb8" /><polygon points="1401.0,637.0 1544.0,531.0 1543.0,561.0 1401.0,666.0" fill="#222426" /><polygon points="1574.0,510.0 1665.0,452.0 1665.0,456.0 1574.0,514.0" fill="#bdbdb8" /><polygon points="1575.0,488.0 1668.0,433.0 1665.0,452.0 1574.0,510.0" fill="#222426" /><polygon points="1077.9,475.0 1080.9,475.5 1080.9,478.0 1077.9,477.5" fill="#111" /><polygon points="1121.4,498.5 1124.4,499.0 1124.4,501.5 1121.4,501.0" fill="#111" /><polygon points="1164.8,521.9 1167.8,522.4 1167.8,524.9 1164.8,524.4" fill="#111" /><polygon points="1208.3,545.4 1211.3,545.9 1211.3,548.4 1208.3,547.9" fill="#111" /><polygon points="1251.7,568.8 1254.7,569.3 1254.7,571.8 1251.7,571.3" fill="#111" /><polygon points="1295.2,592.3 1298.2,592.8 1298.2,595.3 1295.2,594.8" fill="#111" /><polygon points="1338.7,615.7 1341.7,616.2 1341.7,618.7 1338.7,618.2" fill="#111" /><polygon points="1382.1,639.2 1385.1,639.7 1385.1,642.2 1382.1,641.7" fill="#111" /><polygon points="1428.0,627.4 1431.0,627.9 1431.0,630.4 1428.0,629.9" fill="#111" /><polygon points="1475.5,592.3 1478.5,592.8 1478.5,595.3 1475.5,594.8" fill="#111" /><polygon points="1523.0,557.1 1526.0,557.6 1526.0,560.1 1523.0,559.6" fill="#111" /><polygon points="1600.7,479.5 1603.7,480.0 1603.7,482.5 1600.7,482.0" fill="#111" /><polygon points="1646.7,451.3 1649.7,451.8 1649.7,454.3 1646.7,453.8" fill="#111" /><polygon points="1544.0,470.0 1577.0,452.0 1577.0,512.0 1546.0,530.0" fill="#262729" /><polygon points="1549.0,508.0 1573.0,500.0 1573.0,530.0 1549.0,537.0" fill="#a8a8a4" /><polygon points="1547.0,506.0 1574.0,497.0 1574.0,500.0 1547.0,509.0" fill="#e0e0dc" /><polygon points="1072.7,358.6 1359.0,299.0 1493.0,315.0 1475.0,339.0 1554.0,353.0 1403.0,470.0 1116.0,376.0" fill="#797c92" /><polygon points="1038.0,352.0 1358.0,288.0 1493.0,306.0 1493.0,315.0 1359.0,299.0 1072.7,358.6 1116.0,376.0 1110.0,378.0" fill="#b35a3b" /><line x1="1038.0" y1="352.0" x2="1358.0" y2="288.0" stroke="#5a2a1c" stroke-width="1.2" /><line x1="1358.0" y1="288.0" x2="1493.0" y2="306.0" stroke="#5a2a1c" stroke-width="1.2" /><polygon points="1493.0,306.0 1542.0,293.0 1669.0,309.0 1664.0,318.0 1542.0,303.0 1528.0,306.0" fill="#b35a3b" /><line x1="1493.0" y1="306.0" x2="1542.0" y2="293.0" stroke="#5a2a1c" stroke-width="1" /><line x1="1542.0" y1="293.0" x2="1669.0" y2="309.0" stroke="#5a2a1c" stroke-width="1" /><polygon points="1528.0,306.0 1542.0,303.0 1664.0,318.0 1554.0,353.0 1470.0,340.0" fill="#797c92" /><polygon points="1448.0,327.0 1528.0,305.0 1528.0,312.0 1448.0,334.0" fill="#b35a3b" /><polygon points="1448.0,334.0 1528.0,312.0 1528.0,316.0 1448.0,338.0" fill="#8c4632" /><polygon points="1380.0,300.0 1386.0,301.0 1386.0,307.0 1380.0,306.0" fill="#1f2024" /><polygon points="1391.0,300.9 1397.0,301.9 1397.0,307.9 1391.0,306.9" fill="#1f2024" /><polygon points="1402.0,301.8 1408.0,302.8 1408.0,308.8 1402.0,307.8" fill="#1f2024" /><polygon points="1413.0,302.7 1419.0,303.7 1419.0,309.7 1413.0,308.7" fill="#1f2024" /><polygon points="1424.0,303.6 1430.0,304.6 1430.0,310.6 1424.0,309.6" fill="#1f2024" /><polygon points="1435.0,304.5 1441.0,305.5 1441.0,311.5 1435.0,310.5" fill="#1f2024" /><polygon points="1446.0,305.4 1452.0,306.4 1452.0,312.4 1446.0,311.4" fill="#1f2024" /><polygon points="1457.0,306.3 1463.0,307.3 1463.0,313.3 1457.0,312.3" fill="#1f2024" /><polygon points="1468.0,307.2 1474.0,308.2 1474.0,314.2 1468.0,313.2" fill="#1f2024" /><polygon points="1296.0,303.0 1330.0,296.0 1364.0,303.0 1364.0,333.0 1330.0,328.0 1296.0,332.0" fill="#8c4632" /><polygon points="1296.0,303.0 1330.0,296.0 1364.0,303.0 1330.0,309.0" fill="#b35a3b" /><polygon points="1305.0,303.0 1330.0,299.0 1352.0,303.0 1330.0,306.0" fill="#9a9cb0" /><polygon points="1554.0,353.0 1669.0,309.0 1668.0,433.0 1575.0,488.0 1560.0,483.0" fill="#b35a3b" /><polygon points="1667.0,336.0 1682.0,336.0 1670.0,425.0 1666.0,433.0" fill="#a8553a" /><polygon points="1667.0,336.0 1682.0,336.0 1682.0,340.0 1667.0,341.0" fill="#c46a48" /><polygon points="1562.2,360.4 1567.3,358.4 1583.3,465.8 1578.1,467.8" fill="#2a2b30" /><polygon points="1575.7,355.1 1580.8,353.1 1594.7,459.2 1589.5,461.2" fill="#2a2b30" /><polygon points="1589.2,349.9 1594.3,347.9 1606.0,452.8 1600.8,454.8" fill="#2a2b30" /><polygon points="1602.7,344.6 1607.8,342.6 1617.4,446.2 1612.2,448.2" fill="#2a2b30" /><polygon points="1616.2,339.4 1621.3,337.4 1628.8,439.8 1623.6,441.8" fill="#2a2b30" /><polygon points="1629.7,334.1 1634.8,332.1 1640.2,433.2 1635.0,435.2" fill="#2a2b30" /><polygon points="1643.2,328.9 1648.3,326.9 1651.5,426.8 1646.3,428.8" fill="#2a2b30" /><polygon points="1656.7,323.6 1661.8,321.6 1662.9,420.2 1657.7,422.2" fill="#2a2b30" /><polygon points="1038.0,352.0 1401.0,470.0 1401.0,637.0 1052.0,453.0" fill="#b35a3b" /><polygon points="1041.1,362.7 1049.7,365.6 1054.4,401.7 1046.0,398.1" fill="#2a2b30" /><polygon points="1043.3,373.1 1046.4,374.2 1049.0,393.6 1046.0,392.4" fill="#9a9ca6" /><polygon points="1047.1,374.5 1050.2,375.6 1052.8,395.1 1049.7,393.9" fill="#9a9ca6" /><polygon points="1042.8,369.1 1049.6,371.5 1050.1,374.6 1043.2,372.1" fill="#d8d8dc" /><polygon points="1047.8,411.3 1056.2,415.0 1061.1,452.1 1052.8,447.8" fill="#2a2b30" /><polygon points="1050.0,421.8 1053.0,423.2 1055.8,443.6 1052.8,442.1" fill="#9a9ca6" /><polygon points="1053.7,423.5 1056.7,424.9 1059.5,445.5 1056.5,444.0" fill="#9a9ca6" /><polygon points="1049.4,417.8 1056.2,420.8 1056.6,423.9 1049.9,420.8" fill="#d8d8dc" /><polygon points="1048.9,355.5 1051.1,356.3 1064.6,459.6 1062.5,458.5" fill="#8c4632" opacity="0.6"/><polygon points="1053.1,366.8 1062.0,369.9 1066.6,406.7 1057.8,403.0" fill="#2a2b30" /><polygon points="1055.3,377.5 1058.5,378.7 1061.1,398.5 1057.9,397.2" fill="#9a9ca6" /><polygon points="1059.2,378.9 1062.4,380.1 1064.9,400.0 1061.8,398.8" fill="#9a9ca6" /><polygon points="1054.8,373.3 1061.9,375.9 1062.3,379.0 1055.2,376.5" fill="#d8d8dc" /><polygon points="1059.6,416.5 1068.3,420.4 1073.0,458.2 1064.4,453.8" fill="#2a2b30" /><polygon points="1061.8,427.3 1064.9,428.7 1067.6,449.5 1064.5,448.0" fill="#9a9ca6" /><polygon points="1065.6,429.0 1068.8,430.5 1071.4,451.5 1068.3,449.9" fill="#9a9ca6" /><polygon points="1061.2,423.1 1068.2,426.3 1068.6,429.4 1061.6,426.2" fill="#d8d8dc" /><polygon points="1061.4,359.6 1063.5,360.3 1076.6,465.9 1074.5,464.8" fill="#8c4632" opacity="0.6"/><polygon points="1065.6,371.1 1074.8,374.3 1079.2,411.9 1070.1,408.1" fill="#2a2b30" /><polygon points="1067.8,382.0 1071.1,383.2 1073.5,403.5 1070.2,402.2" fill="#9a9ca6" /><polygon points="1071.8,383.5 1075.2,384.7 1077.6,405.1 1074.3,403.8" fill="#9a9ca6" /><polygon points="1067.3,377.8 1074.6,380.4 1075.0,383.6 1067.6,381.0" fill="#d8d8dc" /><polygon points="1071.8,421.9 1080.9,425.9 1085.4,464.6 1076.5,460.0" fill="#2a2b30" /><polygon points="1074.0,432.9 1077.2,434.4 1079.8,455.7 1076.6,454.1" fill="#9a9ca6" /><polygon points="1078.0,434.7 1081.2,436.2 1083.8,457.7 1080.5,456.0" fill="#9a9ca6" /><polygon points="1073.5,428.6 1080.7,431.9 1081.1,435.1 1073.9,431.8" fill="#d8d8dc" /><polygon points="1074.3,363.8 1076.4,364.5 1089.0,472.5 1086.9,471.4" fill="#8c4632" opacity="0.6"/><polygon points="1078.5,375.6 1088.1,378.9 1092.3,417.3 1082.8,413.4" fill="#2a2b30" /><polygon points="1080.7,386.7 1084.1,388.0 1086.5,408.7 1083.0,407.3" fill="#9a9ca6" /><polygon points="1084.9,388.3 1088.3,389.5 1090.6,410.4 1087.2,409.0" fill="#9a9ca6" /><polygon points="1080.2,382.4 1087.8,385.1 1088.2,388.4 1080.6,385.6" fill="#d8d8dc" /><polygon points="1084.5,427.5 1093.9,431.6 1098.3,471.2 1089.0,466.4" fill="#2a2b30" /><polygon points="1086.7,438.7 1090.0,440.3 1092.5,462.1 1089.1,460.4" fill="#9a9ca6" /><polygon points="1090.8,440.6 1094.2,442.2 1096.6,464.1 1093.2,462.4" fill="#9a9ca6" /><polygon points="1086.2,434.4 1093.7,437.8 1094.0,441.1 1086.5,437.6" fill="#d8d8dc" /><polygon points="1087.7,368.1 1089.8,368.8 1101.8,479.3 1099.7,478.2" fill="#8c4632" opacity="0.6"/><polygon points="1091.9,380.2 1101.9,383.6 1105.9,423.0 1096.1,418.9" fill="#2a2b30" /><polygon points="1094.1,391.6 1097.7,392.9 1099.9,414.1 1096.3,412.6" fill="#9a9ca6" /><polygon points="1098.4,393.2 1102.0,394.5 1104.2,415.8 1100.7,414.4" fill="#9a9ca6" /><polygon points="1093.6,387.2 1101.6,390.0 1101.9,393.4 1094.0,390.5" fill="#d8d8dc" /><polygon points="1097.6,433.3 1107.4,437.6 1111.6,478.0 1101.9,473.1" fill="#2a2b30" /><polygon points="1099.8,444.8 1103.3,446.4 1105.7,468.7 1102.2,466.9" fill="#9a9ca6" /><polygon points="1104.1,446.7 1107.6,448.4 1109.9,470.8 1106.4,469.1" fill="#9a9ca6" /><polygon points="1099.3,440.3 1107.1,443.9 1107.5,447.2 1099.7,443.7" fill="#d8d8dc" /><polygon points="1101.6,372.7 1103.7,373.4 1115.2,486.3 1113.1,485.2" fill="#8c4632" opacity="0.6"/><polygon points="1105.8,385.0 1116.2,388.6 1120.0,428.8 1109.8,424.6" fill="#2a2b30" /><polygon points="1108.0,396.7 1111.7,398.0 1113.8,419.7 1110.1,418.2" fill="#9a9ca6" /><polygon points="1112.5,398.3 1116.2,399.7 1118.3,421.5 1114.7,420.0" fill="#9a9ca6" /><polygon points="1107.5,392.1 1115.8,395.1 1116.1,398.5 1107.9,395.5" fill="#d8d8dc" /><polygon points="1111.3,439.3 1121.5,443.8 1125.4,485.2 1115.4,480.0" fill="#2a2b30" /><polygon points="1113.5,451.1 1117.1,452.7 1119.3,475.5 1115.7,473.7" fill="#9a9ca6" /><polygon points="1117.9,453.1 1121.6,454.8 1123.8,477.8 1120.1,475.9" fill="#9a9ca6" /><polygon points="1113.0,446.5 1121.1,450.2 1121.4,453.6 1113.3,449.9" fill="#d8d8dc" /><polygon points="1116.0,377.4 1118.2,378.1 1129.1,493.6 1127.0,492.5" fill="#8c4632" opacity="0.6"/><polygon points="1120.3,390.0 1131.1,393.7 1134.7,434.9 1124.1,430.5" fill="#2a2b30" /><polygon points="1122.4,401.9 1126.3,403.3 1128.3,425.5 1124.5,424.0" fill="#9a9ca6" /><polygon points="1127.2,403.7 1131.0,405.1 1133.0,427.4 1129.2,425.9" fill="#9a9ca6" /><polygon points="1122.0,397.3 1130.6,400.4 1130.9,403.9 1122.3,400.8" fill="#d8d8dc" /><polygon points="1125.5,445.5 1136.1,450.2 1139.8,492.6 1129.4,487.2" fill="#2a2b30" /><polygon points="1127.6,457.6 1131.4,459.3 1133.6,482.7 1129.8,480.8" fill="#9a9ca6" /><polygon points="1132.3,459.7 1136.1,461.5 1138.2,485.0 1134.4,483.1" fill="#9a9ca6" /><polygon points="1127.2,453.0 1135.6,456.8 1136.0,460.3 1127.5,456.4" fill="#d8d8dc" /><polygon points="1131.0,382.2 1133.2,382.9 1143.5,501.3 1141.4,500.2" fill="#8c4632" opacity="0.6"/><polygon points="1135.3,395.2 1146.5,399.0 1150.0,441.2 1138.9,436.6" fill="#2a2b30" /><polygon points="1137.5,407.4 1141.5,408.9 1143.4,431.6 1139.4,430.0" fill="#9a9ca6" /><polygon points="1142.4,409.2 1146.4,410.7 1148.3,433.5 1144.3,431.9" fill="#9a9ca6" /><polygon points="1137.1,402.7 1146.0,405.9 1146.3,409.5 1137.4,406.2" fill="#d8d8dc" /><polygon points="1140.3,452.0 1151.3,456.9 1154.8,500.3 1144.0,494.7" fill="#2a2b30" /><polygon points="1142.4,464.4 1146.3,466.2 1148.4,490.1 1144.4,488.1" fill="#9a9ca6" /><polygon points="1147.2,466.6 1151.2,468.4 1153.1,492.5 1149.2,490.5" fill="#9a9ca6" /><polygon points="1142.0,459.6 1150.8,463.6 1151.1,467.2 1142.3,463.2" fill="#d8d8dc" /><polygon points="1146.7,387.3 1148.8,388.0 1158.6,509.2 1156.5,508.1" fill="#8c4632" opacity="0.6"/><polygon points="1151.0,400.6 1162.7,404.6 1165.9,447.8 1154.4,443.0" fill="#2a2b30" /><polygon points="1153.1,413.1 1157.3,414.6 1159.1,437.9 1155.0,436.2" fill="#9a9ca6" /><polygon points="1158.2,415.0 1162.4,416.5 1164.2,439.9 1160.0,438.3" fill="#9a9ca6" /><polygon points="1152.7,408.2 1162.1,411.6 1162.3,415.3 1153.0,411.9" fill="#d8d8dc" /><polygon points="1155.6,458.8 1167.1,463.9 1170.4,508.3 1159.1,502.5" fill="#2a2b30" /><polygon points="1157.7,471.5 1161.9,473.4 1163.8,497.8 1159.7,495.8" fill="#9a9ca6" /><polygon points="1162.8,473.8 1166.9,475.7 1168.7,500.3 1164.7,498.3" fill="#9a9ca6" /><polygon points="1157.4,466.6 1166.5,470.7 1166.8,474.4 1157.7,470.3" fill="#d8d8dc" /><polygon points="1162.9,392.6 1165.1,393.3 1174.2,517.4 1172.1,516.3" fill="#8c4632" opacity="0.6"/><polygon points="1167.3,406.2 1179.5,410.4 1182.5,454.7 1170.5,449.7" fill="#2a2b30" /><polygon points="1169.4,419.1 1173.8,420.6 1175.5,444.5 1171.1,442.7" fill="#9a9ca6" /><polygon points="1174.8,421.0 1179.1,422.6 1180.8,446.6 1176.4,444.8" fill="#9a9ca6" /><polygon points="1169.1,414.1 1178.8,417.5 1179.0,421.3 1169.3,417.8" fill="#d8d8dc" /><polygon points="1171.7,465.9 1183.6,471.1 1186.7,516.7 1174.9,510.6" fill="#2a2b30" /><polygon points="1173.7,478.8 1178.0,480.8 1179.8,505.9 1175.5,503.8" fill="#9a9ca6" /><polygon points="1179.0,481.3 1183.3,483.2 1185.0,508.5 1180.7,506.4" fill="#9a9ca6" /><polygon points="1173.4,473.9 1182.9,478.2 1183.2,482.0 1173.7,477.6" fill="#d8d8dc" /><polygon points="1179.9,398.1 1182.1,398.8 1190.5,526.0 1188.4,524.9" fill="#8c4632" opacity="0.6"/><polygon points="1184.3,412.0 1197.0,416.4 1199.8,461.8 1187.3,456.6" fill="#2a2b30" /><polygon points="1186.4,425.2 1191.0,426.9 1192.5,451.3 1188.0,449.5" fill="#9a9ca6" /><polygon points="1192.0,427.3 1196.5,428.9 1198.1,453.5 1193.5,451.7" fill="#9a9ca6" /><polygon points="1186.1,420.1 1196.2,423.7 1196.5,427.6 1186.3,424.0" fill="#d8d8dc" /><polygon points="1188.3,473.2 1200.8,478.7 1203.7,525.4 1191.4,519.1" fill="#2a2b30" /><polygon points="1190.4,486.5 1194.9,488.6 1196.5,514.3 1192.1,512.1" fill="#9a9ca6" /><polygon points="1195.9,489.0 1200.4,491.1 1201.9,517.0 1197.5,514.8" fill="#9a9ca6" /><polygon points="1190.1,481.4 1200.0,485.9 1200.3,489.8 1190.3,485.3" fill="#d8d8dc" /><polygon points="1197.6,403.9 1199.8,404.6 1207.6,535.0 1205.5,533.9" fill="#8c4632" opacity="0.6"/><polygon points="1202.1,418.2 1215.3,422.7 1217.8,469.3 1204.8,463.9" fill="#2a2b30" /><polygon points="1204.2,431.7 1208.9,433.4 1210.3,458.5 1205.6,456.6" fill="#9a9ca6" /><polygon points="1210.0,433.8 1214.7,435.6 1216.1,460.8 1211.4,458.9" fill="#9a9ca6" /><polygon points="1203.9,426.5 1214.4,430.2 1214.7,434.2 1204.1,430.4" fill="#d8d8dc" /><polygon points="1205.8,480.9 1218.8,486.6 1221.4,534.5 1208.5,527.9" fill="#2a2b30" /><polygon points="1207.8,494.6 1212.5,496.7 1214.0,523.1 1209.4,520.7" fill="#9a9ca6" /><polygon points="1213.5,497.2 1218.2,499.3 1219.7,525.9 1215.0,523.6" fill="#9a9ca6" /><polygon points="1207.5,489.3 1217.9,494.0 1218.1,498.0 1207.8,493.2" fill="#d8d8dc" /><polygon points="1216.1,409.9 1218.3,410.6 1225.3,544.4 1223.2,543.3" fill="#8c4632" opacity="0.6"/><polygon points="1220.6,424.5 1234.5,429.3 1236.7,477.1 1223.1,471.5" fill="#2a2b30" /><polygon points="1222.7,438.5 1227.7,440.3 1228.9,466.0 1224.0,464.0" fill="#9a9ca6" /><polygon points="1228.8,440.7 1233.7,442.5 1235.0,468.4 1230.0,466.4" fill="#9a9ca6" /><polygon points="1222.4,433.1 1233.5,437.0 1233.7,441.1 1222.6,437.1" fill="#d8d8dc" /><polygon points="1224.0,488.9 1237.6,494.9 1239.9,544.1 1226.5,537.2" fill="#2a2b30" /><polygon points="1226.0,502.9 1230.9,505.2 1232.2,532.2 1227.4,529.8" fill="#9a9ca6" /><polygon points="1232.0,505.7 1236.9,507.9 1238.2,535.2 1233.3,532.8" fill="#9a9ca6" /><polygon points="1225.7,497.6 1236.6,502.5 1236.8,506.6 1225.9,501.6" fill="#d8d8dc" /><polygon points="1235.4,416.2 1237.6,416.9 1243.9,554.2 1241.8,553.1" fill="#8c4632" opacity="0.6"/><polygon points="1240.0,431.2 1254.5,436.2 1256.5,485.3 1242.2,479.4" fill="#2a2b30" /><polygon points="1242.1,445.5 1247.3,447.4 1248.4,473.8 1243.2,471.7" fill="#9a9ca6" /><polygon points="1248.4,447.8 1253.6,449.7 1254.7,476.3 1249.5,474.2" fill="#9a9ca6" /><polygon points="1241.8,440.0 1253.4,444.1 1253.6,448.3 1242.0,444.1" fill="#d8d8dc" /><polygon points="1243.0,497.3 1257.2,503.5 1259.3,554.0 1245.2,546.8" fill="#2a2b30" /><polygon points="1245.0,511.7 1250.1,514.0 1251.3,541.8 1246.3,539.3" fill="#9a9ca6" /><polygon points="1251.3,514.6 1256.4,516.9 1257.5,544.9 1252.4,542.4" fill="#9a9ca6" /><polygon points="1244.8,506.2 1256.1,511.3 1256.3,515.5 1245.0,510.3" fill="#d8d8dc" /><polygon points="1255.7,422.8 1257.9,423.5 1263.4,564.4 1261.3,563.3" fill="#8c4632" opacity="0.6"/><polygon points="1260.3,438.2 1275.5,443.4 1277.2,493.9 1262.2,487.7" fill="#2a2b30" /><polygon points="1262.3,452.9 1267.8,454.9 1268.8,482.0 1263.4,479.8" fill="#9a9ca6" /><polygon points="1269.0,455.3 1274.4,457.3 1275.4,484.6 1270.0,482.5" fill="#9a9ca6" /><polygon points="1262.1,447.2 1274.2,451.5 1274.4,455.9 1262.3,451.5" fill="#d8d8dc" /><polygon points="1262.9,506.0 1277.8,512.6 1279.6,564.5 1264.8,556.9" fill="#2a2b30" /><polygon points="1264.9,520.9 1270.3,523.3 1271.3,551.8 1266.0,549.2" fill="#9a9ca6" /><polygon points="1271.5,523.9 1276.8,526.3 1277.8,555.1 1272.5,552.4" fill="#9a9ca6" /><polygon points="1264.7,515.2 1276.6,520.6 1276.8,524.9 1264.9,519.4" fill="#d8d8dc" /><polygon points="1276.9,429.6 1279.0,430.4 1283.7,575.2 1281.6,574.1" fill="#8c4632" opacity="0.6"/><polygon points="1281.5,445.5 1297.5,451.0 1298.9,502.9 1283.1,496.3" fill="#2a2b30" /><polygon points="1283.6,460.6 1289.3,462.7 1290.1,490.6 1284.4,488.3" fill="#9a9ca6" /><polygon points="1290.6,463.2 1296.3,465.3 1297.0,493.3 1291.4,491.1" fill="#9a9ca6" /><polygon points="1283.4,454.8 1296.1,459.3 1296.2,463.8 1283.5,459.2" fill="#d8d8dc" /><polygon points="1283.7,515.2 1299.4,522.1 1300.8,575.4 1285.4,567.5" fill="#2a2b30" /><polygon points="1285.8,530.5 1291.4,533.0 1292.2,562.3 1286.7,559.6" fill="#9a9ca6" /><polygon points="1292.6,533.6 1298.2,536.2 1299.0,565.8 1293.5,563.0" fill="#9a9ca6" /><polygon points="1285.6,524.6 1298.1,530.3 1298.2,534.7 1285.7,529.0" fill="#d8d8dc" /><polygon points="1299.1,436.9 1301.3,437.6 1305.1,586.4 1303.0,585.3" fill="#8c4632" opacity="0.6"/><polygon points="1303.8,453.2 1320.5,459.0 1321.6,512.3 1305.1,505.5" fill="#2a2b30" /><polygon points="1305.9,468.7 1311.9,470.9 1312.5,499.6 1306.6,497.2" fill="#9a9ca6" /><polygon points="1313.2,471.4 1319.2,473.6 1319.8,502.5 1313.8,500.1" fill="#9a9ca6" /><polygon points="1305.7,462.8 1319.1,467.5 1319.2,472.1 1305.8,467.2" fill="#d8d8dc" /><polygon points="1305.6,524.9 1322.0,532.1 1323.2,586.9 1307.0,578.6" fill="#2a2b30" /><polygon points="1307.6,540.5 1313.5,543.2 1314.2,573.4 1308.4,570.4" fill="#9a9ca6" /><polygon points="1314.8,543.8 1320.7,546.6 1321.3,577.0 1315.5,574.0" fill="#9a9ca6" /><polygon points="1307.5,534.6 1320.6,540.5 1320.7,545.0 1307.6,539.0" fill="#d8d8dc" /><polygon points="1322.4,444.5 1324.6,445.2 1327.5,598.3 1325.4,597.2" fill="#8c4632" opacity="0.6"/><polygon points="1327.2,461.3 1344.8,467.3 1345.6,522.2 1328.2,515.0" fill="#2a2b30" /><polygon points="1329.2,477.3 1335.6,479.6 1336.0,509.0 1329.8,506.5" fill="#9a9ca6" /><polygon points="1337.0,480.1 1343.3,482.4 1343.7,512.1 1337.4,509.6" fill="#9a9ca6" /><polygon points="1329.1,471.1 1343.2,476.1 1343.2,480.8 1329.2,475.7" fill="#d8d8dc" /><polygon points="1328.6,535.0 1345.8,542.6 1346.6,599.0 1329.6,590.2" fill="#2a2b30" /><polygon points="1330.6,551.1 1336.8,554.0 1337.3,585.0 1331.1,581.9" fill="#9a9ca6" /><polygon points="1338.1,554.6 1344.3,557.4 1344.8,588.7 1338.6,585.7" fill="#9a9ca6" /><polygon points="1330.5,545.0 1344.2,551.2 1344.3,555.9 1330.6,549.6" fill="#d8d8dc" /><polygon points="1346.9,452.4 1349.1,453.1 1351.1,610.7 1349.0,609.6" fill="#8c4632" opacity="0.6"/><polygon points="1351.8,469.8 1370.3,476.1 1370.7,532.6 1352.5,525.1" fill="#2a2b30" /><polygon points="1353.8,486.2 1360.5,488.6 1360.8,519.0 1354.2,516.3" fill="#9a9ca6" /><polygon points="1362.0,489.2 1368.6,491.6 1368.8,522.2 1362.2,519.5" fill="#9a9ca6" /><polygon points="1353.8,479.9 1368.5,485.2 1368.6,490.0 1353.8,484.6" fill="#d8d8dc" /><polygon points="1352.7,545.6 1370.9,553.6 1371.3,611.7 1353.4,602.5" fill="#2a2b30" /><polygon points="1354.7,562.2 1361.2,565.2 1361.6,597.2 1355.1,593.9" fill="#9a9ca6" /><polygon points="1362.7,565.9 1369.2,568.9 1369.4,601.1 1363.0,597.9" fill="#9a9ca6" /><polygon points="1354.7,555.9 1369.1,562.5 1369.2,567.3 1354.7,560.7" fill="#d8d8dc" /><polygon points="1372.7,460.8 1374.9,461.5 1375.9,623.8 1373.8,622.7" fill="#8c4632" opacity="0.6"/><polygon points="1377.7,478.7 1397.2,485.4 1397.3,543.6 1378.0,535.6" fill="#2a2b30" /><polygon points="1379.7,495.7 1386.7,498.2 1386.8,529.4 1379.9,526.6" fill="#9a9ca6" /><polygon points="1388.3,498.8 1395.3,501.3 1395.3,532.8 1388.4,530.1" fill="#9a9ca6" /><polygon points="1379.7,489.1 1395.3,494.7 1395.3,499.7 1379.7,494.0" fill="#d8d8dc" /><polygon points="1378.1,556.8 1397.3,565.2 1397.3,625.1 1378.5,615.4" fill="#2a2b30" /><polygon points="1380.1,573.9 1387.0,577.1 1387.1,610.0 1380.3,606.6" fill="#9a9ca6" /><polygon points="1388.5,577.8 1395.4,581.0 1395.4,614.2 1388.6,610.7" fill="#9a9ca6" /><polygon points="1380.1,567.4 1395.4,574.3 1395.4,579.3 1380.1,572.3" fill="#d8d8dc" /><polygon points="1399.9,469.6 1402.1,470.4 1402.0,637.6 1400.0,636.4" fill="#8c4632" opacity="0.6"/><polygon points="1038.0,352.0 1044.0,354.0 1050.0,452.0 1052.0,453.0" fill="#8c4632" /><polygon points="1401.0,470.0 1546.0,400.0 1544.0,531.0 1401.0,637.0" fill="#a8553a" /><polygon points="1412.1,481.1 1423.7,475.2 1423.6,531.6 1412.0,538.6" fill="#2a2b30" /><polygon points="1413.8,491.7 1421.9,487.4 1421.9,524.6 1413.8,529.3" fill="#9a9ca6" opacity="0.8"/><polygon points="1412.0,556.6 1423.6,549.4 1423.4,609.1 1411.9,617.4" fill="#2a2b30" /><polygon points="1413.7,567.0 1421.8,561.8 1421.7,602.2 1413.7,608.0" fill="#9a9ca6" opacity="0.8"/><polygon points="1432.6,470.6 1443.6,465.1 1443.4,519.8 1432.4,526.3" fill="#2a2b30" /><polygon points="1434.2,480.9 1441.9,476.9 1441.8,512.9 1434.1,517.4" fill="#9a9ca6" opacity="0.8"/><polygon points="1432.4,543.8 1443.3,537.0 1443.1,594.9 1432.2,602.7" fill="#2a2b30" /><polygon points="1434.0,553.9 1441.6,549.0 1441.5,588.2 1433.9,593.6" fill="#9a9ca6" opacity="0.8"/><polygon points="1452.0,460.8 1462.4,455.5 1462.1,508.6 1451.7,514.8" fill="#2a2b30" /><polygon points="1453.5,470.8 1460.8,466.9 1460.6,501.9 1453.3,506.2" fill="#9a9ca6" opacity="0.8"/><polygon points="1451.7,531.8 1462.0,525.3 1461.7,581.4 1451.4,588.9" fill="#2a2b30" /><polygon points="1453.2,541.6 1460.4,536.9 1460.2,575.0 1453.0,580.1" fill="#9a9ca6" opacity="0.8"/><polygon points="1470.3,451.5 1480.2,446.5 1479.8,498.0 1470.0,503.9" fill="#2a2b30" /><polygon points="1471.7,461.2 1478.6,457.6 1478.4,491.5 1471.5,495.5" fill="#9a9ca6" opacity="0.8"/><polygon points="1469.9,520.4 1479.7,514.2 1479.2,568.7 1469.5,575.8" fill="#2a2b30" /><polygon points="1471.3,529.9 1478.1,525.5 1477.8,562.4 1471.0,567.2" fill="#9a9ca6" opacity="0.8"/><polygon points="1487.7,442.6 1497.0,437.9 1496.5,488.0 1487.3,493.5" fill="#2a2b30" /><polygon points="1489.0,452.1 1495.5,448.7 1495.2,481.7 1488.7,485.5" fill="#9a9ca6" opacity="0.8"/><polygon points="1487.1,509.5 1496.4,503.7 1495.9,556.7 1486.7,563.4" fill="#2a2b30" /><polygon points="1488.4,518.8 1494.9,514.7 1494.6,550.5 1488.1,555.1" fill="#9a9ca6" opacity="0.8"/><polygon points="1504.1,434.3 1513.0,429.8 1512.5,478.5 1503.6,483.7" fill="#2a2b30" /><polygon points="1505.4,443.5 1511.6,440.2 1511.2,472.3 1505.0,475.9" fill="#9a9ca6" opacity="0.8"/><polygon points="1503.5,499.3 1512.3,493.8 1511.7,545.3 1503.0,551.6" fill="#2a2b30" /><polygon points="1504.7,508.3 1510.9,504.4 1510.5,539.2 1504.3,543.6" fill="#9a9ca6" opacity="0.8"/><polygon points="1519.8,426.3 1528.2,422.0 1527.6,469.4 1519.2,474.4" fill="#2a2b30" /><polygon points="1520.9,435.3 1526.8,432.2 1526.4,463.4 1520.5,466.8" fill="#9a9ca6" opacity="0.8"/><polygon points="1519.0,489.6 1527.4,484.3 1526.7,534.4 1518.4,540.4" fill="#2a2b30" /><polygon points="1520.2,498.4 1526.0,494.6 1525.6,528.5 1519.7,532.7" fill="#9a9ca6" opacity="0.8"/><polygon points="1534.6,418.8 1542.7,414.7 1542.0,460.8 1534.0,465.6" fill="#2a2b30" /><polygon points="1535.7,427.5 1541.3,424.6 1540.9,454.9 1535.3,458.2" fill="#9a9ca6" opacity="0.8"/><polygon points="1533.8,480.3 1541.8,475.3 1541.0,524.1 1533.1,529.8" fill="#2a2b30" /><polygon points="1534.9,488.9 1540.4,485.3 1539.9,518.3 1534.4,522.3" fill="#9a9ca6" opacity="0.8"/><polygon points="1400.0,470.0 1406.0,468.0 1406.0,636.0 1400.0,636.0" fill="#9c4d35" /><polygon points="1436.0,569.0 1483.0,542.0 1490.0,546.0 1442.0,575.0" fill="#1d1e20" /><polygon points="1436.0,569.0 1483.0,542.0 1483.0,546.0 1436.0,573.0" fill="#7a7a80" /><polygon points="1439.0,626.0 1472.0,592.0 1482.0,584.0 1483.0,598.0 1450.0,632.0 1441.0,634.0" fill="#85868c" /><line x1="1441.0" y1="624.0" x2="1450.0" y2="628.0" stroke="#b8b8bd" stroke-width="0.9" /><line x1="1444.6" y1="620.2" x2="1453.6" y2="624.2" stroke="#b8b8bd" stroke-width="0.9" /><line x1="1448.2" y1="616.4" x2="1457.2" y2="620.4" stroke="#b8b8bd" stroke-width="0.9" /><line x1="1451.8" y1="612.6" x2="1460.8" y2="616.6" stroke="#b8b8bd" stroke-width="0.9" /><line x1="1455.4" y1="608.8" x2="1464.4" y2="612.8" stroke="#b8b8bd" stroke-width="0.9" /><line x1="1459.0" y1="605.0" x2="1468.0" y2="609.0" stroke="#b8b8bd" stroke-width="0.9" /><line x1="1462.6" y1="601.2" x2="1471.6" y2="605.2" stroke="#b8b8bd" stroke-width="0.9" /><line x1="1466.2" y1="597.4" x2="1475.2" y2="601.4" stroke="#b8b8bd" stroke-width="0.9" /><line x1="1469.8" y1="593.6" x2="1478.8" y2="597.6" stroke="#b8b8bd" stroke-width="0.9" /><polygon points="1612.0,470.0 1640.0,452.0 1646.0,456.0 1646.0,470.0 1622.0,487.0 1612.0,484.0" fill="#8a8b90" /><line x1="1614.0" y1="483.0" x2="1640.0" y2="466.0" stroke="#b8b8bc" stroke-width="0.8" /><line x1="1615.5" y1="480.6" x2="1640.0" y2="463.6" stroke="#b8b8bc" stroke-width="0.8" /><line x1="1617.0" y1="478.2" x2="1640.0" y2="461.2" stroke="#b8b8bc" stroke-width="0.8" /><line x1="1618.5" y1="475.8" x2="1640.0" y2="458.8" stroke="#b8b8bc" stroke-width="0.8" /><line x1="1620.0" y1="473.4" x2="1640.0" y2="456.4" stroke="#b8b8bc" stroke-width="0.8" /><line x1="1621.5" y1="471.0" x2="1640.0" y2="454.0" stroke="#b8b8bc" stroke-width="0.8" /><polygon points="1079.0,484.0 1086.0,474.0 1100.0,470.0 1111.0,473.0 1105.0,480.0 1094.0,486.0 1088.0,494.0 1082.0,493.0" fill="#8e8f94" /><polygon points="1082.0,492.0 1093.0,496.0 1109.0,489.0 1109.0,492.0 1093.0,499.0 1082.0,495.0" fill="#c8c8cc" /><polygon points="1304.0,386.0 1372.0,380.0 1461.0,403.0 1460.0,426.0 1389.0,448.0 1323.0,422.0 1304.0,407.0" fill="#8c4630" /><line x1="1330.0" y1="395.0" x2="1455.0" y2="418.0" stroke="#5e2e20" stroke-width="0.8" /><polygon points="1050.5,427.5 1046.0,395.0 1360.0,319.0 1509.6,347.5 1404.1,385.9 1588.1,432.4 1585.6,467.1 1403.0,596.0" fill="#ffff00" opacity="0.32"/><polygon points="1404.1,385.9 1509.6,347.5 1675.0,379.0 1672.0,406.0 1585.6,467.1 1588.1,432.4" fill="#ffff00" opacity="0.2"/><polygon points="1306.0,388.0 1372.0,382.0 1458.0,404.0 1457.0,425.0 1389.0,446.0 1325.0,421.0 1306.0,406.0" fill="#8c4630" opacity="0.9"/><polygon points="1403.0,546.0 1675.0,379.0 1672.0,406.0 1403.0,596.0" fill="#ffff00" opacity="0.3"/><polygon points="1046.0,395.0 1403.0,546.0 1403.0,596.0 1050.5,427.5" fill="#ffff00" opacity="0.3"/><polygon points="1046.0,395.0 1360.0,319.0 1361.0,339.0 1050.5,427.5" fill="#ffff00" opacity="0.85"/><polygon points="1049.9,398.7 1063.8,395.3 1066.6,416.3 1052.9,420.1" fill="#8a8d8a" opacity="0.9"/><polygon points="1070.2,393.7 1083.5,390.4 1086.1,410.9 1072.9,414.5" fill="#8a8d8a" opacity="0.9"/><polygon points="1089.6,388.9 1102.4,385.7 1104.9,405.7 1092.2,409.2" fill="#8a8d8a" opacity="0.9"/><polygon points="1108.3,384.3 1120.6,381.2 1122.9,400.7 1110.7,404.1" fill="#8a8d8a" opacity="0.9"/><polygon points="1126.3,379.8 1138.1,376.9 1140.2,396.0 1128.5,399.2" fill="#8a8d8a" opacity="0.9"/><polygon points="1143.5,375.5 1154.9,372.7 1157.0,391.3 1145.7,394.5" fill="#8a8d8a" opacity="0.9"/><polygon points="1160.2,371.4 1171.1,368.7 1173.0,386.9 1162.2,389.9" fill="#8a8d8a" opacity="0.9"/><polygon points="1176.2,367.4 1186.8,364.8 1188.6,382.6 1178.1,385.5" fill="#8a8d8a" opacity="0.9"/><polygon points="1191.7,363.6 1201.9,361.1 1203.5,378.5 1193.4,381.3" fill="#8a8d8a" opacity="0.9"/><polygon points="1206.6,359.9 1216.4,357.4 1218.0,374.5 1208.2,377.2" fill="#8a8d8a" opacity="0.9"/><polygon points="1221.0,356.3 1230.5,354.0 1232.0,370.6 1222.5,373.2" fill="#8a8d8a" opacity="0.9"/><polygon points="1234.9,352.9 1244.1,350.6 1245.5,366.9 1236.3,369.4" fill="#8a8d8a" opacity="0.9"/><polygon points="1248.4,349.5 1257.2,347.3 1258.5,363.3 1249.7,365.7" fill="#8a8d8a" opacity="0.9"/><polygon points="1261.4,346.3 1270.0,344.2 1271.2,359.8 1262.6,362.1" fill="#8a8d8a" opacity="0.9"/><polygon points="1273.9,343.2 1282.3,341.1 1283.4,356.4 1275.1,358.7" fill="#8a8d8a" opacity="0.9"/><polygon points="1286.1,340.2 1294.2,338.2 1295.2,353.1 1287.2,355.3" fill="#8a8d8a" opacity="0.9"/><polygon points="1297.9,337.2 1305.8,335.3 1306.7,349.9 1299.0,352.1" fill="#8a8d8a" opacity="0.9"/><polygon points="1309.4,334.4 1317.0,332.5 1317.9,346.9 1310.3,348.9" fill="#8a8d8a" opacity="0.9"/><polygon points="1320.5,331.6 1327.8,329.8 1328.7,343.9 1321.4,345.9" fill="#8a8d8a" opacity="0.9"/><polygon points="1331.2,329.0 1338.4,327.2 1339.2,341.0 1332.1,342.9" fill="#8a8d8a" opacity="0.9"/><polygon points="1341.7,326.4 1348.6,324.7 1349.4,338.2 1342.5,340.1" fill="#8a8d8a" opacity="0.9"/><polygon points="1351.8,323.9 1358.6,322.2 1359.2,335.4 1352.5,337.3" fill="#8a8d8a" opacity="0.9"/><line x1="1046.0" y1="395.0" x2="1050.5" y2="427.5" stroke="#ffff2a" stroke-width="2.2" /><line x1="1066.4" y1="390.1" x2="1070.6" y2="421.8" stroke="#ffff2a" stroke-width="2.2" /><line x1="1086.0" y1="385.3" x2="1090.0" y2="416.2" stroke="#ffff2a" stroke-width="2.2" /><line x1="1104.9" y1="380.8" x2="1108.5" y2="411.0" stroke="#ffff2a" stroke-width="2.2" /><line x1="1123.0" y1="376.4" x2="1126.4" y2="405.9" stroke="#ffff2a" stroke-width="2.2" /><line x1="1140.4" y1="372.2" x2="1143.6" y2="401.0" stroke="#ffff2a" stroke-width="2.2" /><line x1="1157.1" y1="368.1" x2="1160.2" y2="396.2" stroke="#ffff2a" stroke-width="2.2" /><line x1="1173.3" y1="364.2" x2="1176.1" y2="391.7" stroke="#ffff2a" stroke-width="2.2" /><line x1="1188.9" y1="360.4" x2="1191.5" y2="387.3" stroke="#ffff2a" stroke-width="2.2" /><line x1="1203.9" y1="356.8" x2="1206.4" y2="383.1" stroke="#ffff2a" stroke-width="2.2" /><line x1="1218.4" y1="353.3" x2="1220.7" y2="379.0" stroke="#ffff2a" stroke-width="2.2" /><line x1="1232.4" y1="349.9" x2="1234.6" y2="375.0" stroke="#ffff2a" stroke-width="2.2" /><line x1="1245.9" y1="346.6" x2="1248.0" y2="371.2" stroke="#ffff2a" stroke-width="2.2" /><line x1="1259.0" y1="343.4" x2="1261.0" y2="367.5" stroke="#ffff2a" stroke-width="2.2" /><line x1="1271.7" y1="340.4" x2="1273.5" y2="363.9" stroke="#ffff2a" stroke-width="2.2" /><line x1="1284.0" y1="337.4" x2="1285.6" y2="360.5" stroke="#ffff2a" stroke-width="2.2" /><line x1="1295.9" y1="334.5" x2="1297.4" y2="357.1" stroke="#ffff2a" stroke-width="2.2" /><line x1="1307.4" y1="331.7" x2="1308.8" y2="353.9" stroke="#ffff2a" stroke-width="2.2" /><line x1="1318.5" y1="329.0" x2="1319.9" y2="350.7" stroke="#ffff2a" stroke-width="2.2" /><line x1="1329.4" y1="326.4" x2="1330.6" y2="347.7" stroke="#ffff2a" stroke-width="2.2" /><line x1="1339.9" y1="323.9" x2="1341.0" y2="344.7" stroke="#ffff2a" stroke-width="2.2" /><line x1="1350.1" y1="321.4" x2="1351.2" y2="341.8" stroke="#ffff2a" stroke-width="2.2" /><line x1="1360.0" y1="319.0" x2="1361.0" y2="339.0" stroke="#ffff2a" stroke-width="2.2" /><line x1="1046.0" y1="395.0" x2="1360.0" y2="319.0" stroke="#ffff70" stroke-width="3.0" /><line x1="1050.5" y1="427.5" x2="1361.0" y2="339.0" stroke="#ffff2a" stroke-width="3.0" /><line x1="1046.6" y1="399.6" x2="1360.1" y2="321.8" stroke="#ffff2a" stroke-width="1.3" /><line x1="1049.6" y1="421.0" x2="1360.8" y2="335.0" stroke="#ffff2a" stroke-width="1.3" /><polygon points="1360.0,319.0 1675.0,379.0 1672.0,406.0 1361.0,339.0" fill="#ffff00" opacity="0.85"/><polygon points="1361.8,322.1 1369.1,323.5 1369.7,336.9 1362.5,335.4" fill="#8a8d8a" opacity="0.9"/><polygon points="1372.6,324.2 1380.1,325.7 1380.6,339.2 1373.2,337.6" fill="#8a8d8a" opacity="0.9"/><polygon points="1383.6,326.4 1391.3,327.8 1391.7,341.5 1384.1,339.9" fill="#8a8d8a" opacity="0.9"/><polygon points="1394.9,328.5 1402.7,330.1 1403.1,343.9 1395.4,342.3" fill="#8a8d8a" opacity="0.9"/><polygon points="1406.5,330.8 1414.5,332.3 1414.8,346.4 1406.8,344.7" fill="#8a8d8a" opacity="0.9"/><polygon points="1418.3,333.1 1426.5,334.7 1426.8,348.9 1418.6,347.2" fill="#8a8d8a" opacity="0.9"/><polygon points="1430.5,335.4 1438.9,337.1 1439.1,351.5 1430.7,349.7" fill="#8a8d8a" opacity="0.9"/><polygon points="1442.9,337.9 1451.6,339.5 1451.7,354.1 1443.1,352.3" fill="#8a8d8a" opacity="0.9"/><polygon points="1455.7,340.3 1464.6,342.1 1464.6,356.8 1455.8,355.0" fill="#8a8d8a" opacity="0.9"/><polygon points="1468.9,342.9 1478.0,344.7 1477.9,359.6 1468.8,357.7" fill="#8a8d8a" opacity="0.9"/><polygon points="1482.3,345.5 1491.7,347.3 1491.5,362.5 1482.2,360.5" fill="#8a8d8a" opacity="0.9"/><polygon points="1496.2,348.2 1505.8,350.1 1505.5,365.4 1495.9,363.4" fill="#8a8d8a" opacity="0.9"/><polygon points="1510.4,350.9 1520.3,352.9 1519.9,368.5 1510.0,366.4" fill="#8a8d8a" opacity="0.9"/><polygon points="1525.0,353.8 1535.2,355.8 1534.6,371.6 1524.6,369.5" fill="#8a8d8a" opacity="0.9"/><polygon points="1540.1,356.7 1550.6,358.7 1549.8,374.8 1539.5,372.6" fill="#8a8d8a" opacity="0.9"/><polygon points="1555.6,359.7 1566.3,361.8 1565.5,378.1 1554.8,375.8" fill="#8a8d8a" opacity="0.9"/><polygon points="1571.5,362.8 1582.6,364.9 1581.6,381.4 1570.6,379.1" fill="#8a8d8a" opacity="0.9"/><polygon points="1587.9,366.0 1599.3,368.2 1598.1,384.9 1586.8,382.6" fill="#8a8d8a" opacity="0.9"/><polygon points="1604.8,369.2 1616.5,371.5 1615.2,388.5 1603.5,386.1" fill="#8a8d8a" opacity="0.9"/><polygon points="1622.2,372.6 1634.3,375.0 1632.8,392.2 1620.7,389.7" fill="#8a8d8a" opacity="0.9"/><polygon points="1640.1,376.1 1652.6,378.5 1650.9,396.0 1638.5,393.4" fill="#8a8d8a" opacity="0.9"/><polygon points="1658.6,379.7 1671.5,382.2 1669.6,400.0 1656.8,397.3" fill="#8a8d8a" opacity="0.9"/><line x1="1360.0" y1="319.0" x2="1361.0" y2="339.0" stroke="#ffff2a" stroke-width="2.2" /><line x1="1370.7" y1="321.0" x2="1371.6" y2="341.3" stroke="#ffff2a" stroke-width="2.2" /><line x1="1381.7" y1="323.1" x2="1382.5" y2="343.6" stroke="#ffff2a" stroke-width="2.2" /><line x1="1393.0" y1="325.3" x2="1393.7" y2="346.0" stroke="#ffff2a" stroke-width="2.2" /><line x1="1404.5" y1="327.5" x2="1405.1" y2="348.5" stroke="#ffff2a" stroke-width="2.2" /><line x1="1416.3" y1="329.7" x2="1416.8" y2="351.0" stroke="#ffff2a" stroke-width="2.2" /><line x1="1428.4" y1="332.0" x2="1428.8" y2="353.6" stroke="#ffff2a" stroke-width="2.2" /><line x1="1440.9" y1="334.4" x2="1441.1" y2="356.3" stroke="#ffff2a" stroke-width="2.2" /><line x1="1453.6" y1="336.8" x2="1453.7" y2="359.0" stroke="#ffff2a" stroke-width="2.2" /><line x1="1466.7" y1="339.3" x2="1466.7" y2="361.8" stroke="#ffff2a" stroke-width="2.2" /><line x1="1480.2" y1="341.9" x2="1480.0" y2="364.6" stroke="#ffff2a" stroke-width="2.2" /><line x1="1494.0" y1="344.5" x2="1493.6" y2="367.6" stroke="#ffff2a" stroke-width="2.2" /><line x1="1508.2" y1="347.2" x2="1507.7" y2="370.6" stroke="#ffff2a" stroke-width="2.2" /><line x1="1522.8" y1="350.0" x2="1522.1" y2="373.7" stroke="#ffff2a" stroke-width="2.2" /><line x1="1537.8" y1="352.9" x2="1536.9" y2="376.9" stroke="#ffff2a" stroke-width="2.2" /><line x1="1553.2" y1="355.8" x2="1552.1" y2="380.2" stroke="#ffff2a" stroke-width="2.2" /><line x1="1569.1" y1="358.8" x2="1567.7" y2="383.5" stroke="#ffff2a" stroke-width="2.2" /><line x1="1585.4" y1="361.9" x2="1583.9" y2="387.0" stroke="#ffff2a" stroke-width="2.2" /><line x1="1602.3" y1="365.1" x2="1600.4" y2="390.6" stroke="#ffff2a" stroke-width="2.2" /><line x1="1619.6" y1="368.5" x2="1617.5" y2="394.3" stroke="#ffff2a" stroke-width="2.2" /><line x1="1637.5" y1="371.9" x2="1635.1" y2="398.1" stroke="#ffff2a" stroke-width="2.2" /><line x1="1656.0" y1="375.4" x2="1653.3" y2="402.0" stroke="#ffff2a" stroke-width="2.2" /><line x1="1675.0" y1="379.0" x2="1672.0" y2="406.0" stroke="#ffff2a" stroke-width="2.2" /><line x1="1360.0" y1="319.0" x2="1675.0" y2="379.0" stroke="#ffff70" stroke-width="3.0" /><line x1="1361.0" y1="339.0" x2="1672.0" y2="406.0" stroke="#ffff2a" stroke-width="3.0" /><line x1="1360.1" y1="321.8" x2="1674.6" y2="382.8" stroke="#ffff2a" stroke-width="1.3" /><line x1="1360.8" y1="335.0" x2="1672.6" y2="400.6" stroke="#ffff2a" stroke-width="1.3" /><polygon points="1046.0,395.0 1403.0,546.0 1403.0,596.0 1050.5,427.5" fill="#ffff00" opacity="0.55"/><polygon points="1048.7,403.8 1054.8,406.5 1057.5,426.2 1051.4,423.4" fill="#d8b030" opacity="0.35"/><polygon points="1050.9,407.2 1053.4,408.3 1055.5,424.1 1053.1,422.9" fill="#24262c" opacity="0.85"/><polygon points="1058.2,407.9 1064.5,410.7 1067.1,430.8 1060.8,427.8" fill="#d8b030" opacity="0.35"/><polygon points="1060.4,411.4 1062.9,412.5 1065.0,428.5 1062.5,427.4" fill="#24262c" opacity="0.85"/><polygon points="1067.9,412.2 1074.4,415.0 1077.0,435.4 1070.6,432.4" fill="#d8b030" opacity="0.35"/><polygon points="1070.2,415.7 1072.8,416.9 1074.9,433.1 1072.3,431.9" fill="#24262c" opacity="0.85"/><polygon points="1078.0,416.6 1084.7,419.5 1087.3,440.2 1080.6,437.1" fill="#d8b030" opacity="0.35"/><polygon points="1080.3,420.2 1083.0,421.4 1085.1,437.9 1082.4,436.6" fill="#24262c" opacity="0.85"/><polygon points="1088.4,421.1 1095.3,424.2 1097.9,445.2 1090.9,441.9" fill="#d8b030" opacity="0.35"/><polygon points="1090.8,424.8 1093.5,426.0 1095.6,442.8 1092.8,441.5" fill="#24262c" opacity="0.85"/><polygon points="1099.1,425.8 1106.3,429.0 1108.8,450.3 1101.7,447.0" fill="#d8b030" opacity="0.35"/><polygon points="1101.6,429.6 1104.5,430.9 1106.5,447.9 1103.6,446.6" fill="#24262c" opacity="0.85"/><polygon points="1110.2,430.7 1117.7,433.9 1120.2,455.7 1112.7,452.2" fill="#d8b030" opacity="0.35"/><polygon points="1112.8,434.5 1115.8,435.8 1117.8,453.2 1114.8,451.8" fill="#24262c" opacity="0.85"/><polygon points="1121.7,435.7 1129.5,439.1 1131.9,461.2 1124.2,457.6" fill="#d8b030" opacity="0.35"/><polygon points="1124.4,439.6 1127.5,441.0 1129.4,458.6 1126.3,457.2" fill="#24262c" opacity="0.85"/><polygon points="1133.7,440.9 1141.7,444.4 1144.1,466.9 1136.1,463.2" fill="#d8b030" opacity="0.35"/><polygon points="1136.4,444.9 1139.6,446.3 1141.5,464.3 1138.3,462.8" fill="#24262c" opacity="0.85"/><polygon points="1146.1,446.3 1154.4,449.9 1156.7,472.8 1148.4,468.9" fill="#d8b030" opacity="0.35"/><polygon points="1148.8,450.4 1152.2,451.9 1154.0,470.1 1150.7,468.6" fill="#24262c" opacity="0.85"/><polygon points="1158.9,451.9 1167.5,455.7 1169.8,479.0 1161.2,474.9" fill="#d8b030" opacity="0.35"/><polygon points="1161.8,456.1 1165.2,457.6 1167.0,476.2 1163.6,474.6" fill="#24262c" opacity="0.85"/><polygon points="1172.2,457.8 1181.2,461.7 1183.3,485.3 1174.4,481.2" fill="#d8b030" opacity="0.35"/><polygon points="1175.2,462.0 1178.8,463.6 1180.5,482.5 1176.9,480.8" fill="#24262c" opacity="0.85"/><polygon points="1186.1,463.8 1195.4,467.9 1197.4,492.0 1188.2,487.6" fill="#d8b030" opacity="0.35"/><polygon points="1189.1,468.2 1192.8,469.8 1194.5,489.1 1190.8,487.3" fill="#24262c" opacity="0.85"/><polygon points="1200.5,470.1 1210.2,474.3 1212.1,498.9 1202.5,494.3" fill="#d8b030" opacity="0.35"/><polygon points="1203.6,474.6 1207.5,476.3 1209.1,495.9 1205.2,494.1" fill="#24262c" opacity="0.85"/><polygon points="1215.5,476.6 1225.5,481.0 1227.4,506.0 1217.4,501.3" fill="#d8b030" opacity="0.35"/><polygon points="1218.7,481.2 1222.7,483.0 1224.2,502.9 1220.2,501.1" fill="#24262c" opacity="0.85"/><polygon points="1231.1,483.4 1241.6,488.0 1243.3,513.5 1232.9,508.6" fill="#d8b030" opacity="0.35"/><polygon points="1234.4,488.2 1238.6,490.0 1240.0,510.3 1235.9,508.4" fill="#24262c" opacity="0.85"/><polygon points="1247.3,490.5 1258.3,495.3 1259.9,521.3 1249.0,516.2" fill="#d8b030" opacity="0.35"/><polygon points="1250.8,495.4 1255.2,497.3 1256.5,518.0 1252.1,516.0" fill="#24262c" opacity="0.85"/><polygon points="1264.3,497.9 1275.7,502.9 1277.2,529.4 1265.8,524.1" fill="#d8b030" opacity="0.35"/><polygon points="1267.9,502.9 1272.5,504.9 1273.6,526.0 1269.1,523.9" fill="#24262c" opacity="0.85"/><polygon points="1282.0,505.7 1293.9,510.9 1295.2,537.9 1283.4,532.3" fill="#d8b030" opacity="0.35"/><polygon points="1285.7,510.8 1290.5,512.9 1291.5,534.4 1286.8,532.2" fill="#24262c" opacity="0.85"/><polygon points="1300.5,513.8 1313.0,519.2 1314.1,546.7 1301.7,540.9" fill="#d8b030" opacity="0.35"/><polygon points="1304.4,519.0 1309.4,521.2 1310.3,543.2 1305.3,540.8" fill="#24262c" opacity="0.85"/><polygon points="1319.9,522.2 1333.0,527.9 1333.8,556.0 1320.9,549.9" fill="#d8b030" opacity="0.35"/><polygon points="1323.9,527.6 1329.1,529.9 1329.8,552.3 1324.7,549.9" fill="#24262c" opacity="0.85"/><polygon points="1340.2,531.1 1353.9,537.1 1354.5,565.7 1340.9,559.4" fill="#d8b030" opacity="0.35"/><polygon points="1344.3,536.6 1349.8,539.0 1350.3,561.9 1344.9,559.3" fill="#24262c" opacity="0.85"/><polygon points="1361.4,540.4 1375.8,546.6 1376.2,575.9 1362.0,569.2" fill="#d8b030" opacity="0.35"/><polygon points="1365.8,546.1 1371.5,548.6 1371.8,571.9 1366.1,569.3" fill="#24262c" opacity="0.85"/><polygon points="1383.7,550.1 1398.8,556.7 1398.9,586.6 1384.0,579.6" fill="#d8b030" opacity="0.35"/><polygon points="1388.2,556.0 1394.3,558.7 1394.4,582.5 1388.4,579.7" fill="#24262c" opacity="0.85"/><line x1="1046.0" y1="395.0" x2="1050.5" y2="427.5" stroke="#ffff2a" stroke-width="2.2" /><line x1="1055.4" y1="399.0" x2="1059.9" y2="432.0" stroke="#ffff2a" stroke-width="2.2" /><line x1="1065.1" y1="403.1" x2="1069.5" y2="436.6" stroke="#ffff2a" stroke-width="2.2" /><line x1="1075.1" y1="407.3" x2="1079.5" y2="441.3" stroke="#ffff2a" stroke-width="2.2" /><line x1="1085.4" y1="411.7" x2="1089.8" y2="446.3" stroke="#ffff2a" stroke-width="2.2" /><line x1="1096.1" y1="416.2" x2="1100.4" y2="451.4" stroke="#ffff2a" stroke-width="2.2" /><line x1="1107.2" y1="420.9" x2="1111.4" y2="456.6" stroke="#ffff2a" stroke-width="2.2" /><line x1="1118.7" y1="425.7" x2="1122.8" y2="462.1" stroke="#ffff2a" stroke-width="2.2" /><line x1="1130.6" y1="430.8" x2="1134.6" y2="467.7" stroke="#ffff2a" stroke-width="2.2" /><line x1="1142.9" y1="436.0" x2="1146.8" y2="473.5" stroke="#ffff2a" stroke-width="2.2" /><line x1="1155.7" y1="441.4" x2="1159.5" y2="479.6" stroke="#ffff2a" stroke-width="2.2" /><line x1="1168.9" y1="447.0" x2="1172.7" y2="485.9" stroke="#ffff2a" stroke-width="2.2" /><line x1="1182.7" y1="452.8" x2="1186.3" y2="492.4" stroke="#ffff2a" stroke-width="2.2" /><line x1="1197.1" y1="458.9" x2="1200.5" y2="499.2" stroke="#ffff2a" stroke-width="2.2" /><line x1="1212.0" y1="465.2" x2="1215.2" y2="506.2" stroke="#ffff2a" stroke-width="2.2" /><line x1="1227.5" y1="471.8" x2="1230.6" y2="513.6" stroke="#ffff2a" stroke-width="2.2" /><line x1="1243.7" y1="478.6" x2="1246.6" y2="521.2" stroke="#ffff2a" stroke-width="2.2" /><line x1="1260.6" y1="485.8" x2="1263.2" y2="529.2" stroke="#ffff2a" stroke-width="2.2" /><line x1="1278.3" y1="493.2" x2="1280.6" y2="537.5" stroke="#ffff2a" stroke-width="2.2" /><line x1="1296.7" y1="501.0" x2="1298.8" y2="546.2" stroke="#ffff2a" stroke-width="2.2" /><line x1="1316.0" y1="509.2" x2="1317.7" y2="555.2" stroke="#ffff2a" stroke-width="2.2" /><line x1="1336.2" y1="517.7" x2="1337.6" y2="564.7" stroke="#ffff2a" stroke-width="2.2" /><line x1="1357.4" y1="526.7" x2="1358.3" y2="574.7" stroke="#ffff2a" stroke-width="2.2" /><line x1="1379.6" y1="536.1" x2="1380.1" y2="585.1" stroke="#ffff2a" stroke-width="2.2" /><line x1="1403.0" y1="546.0" x2="1403.0" y2="596.0" stroke="#ffff2a" stroke-width="2.2" /><line x1="1046.0" y1="395.0" x2="1403.0" y2="546.0" stroke="#ffff70" stroke-width="3.0" /><line x1="1050.5" y1="427.5" x2="1403.0" y2="596.0" stroke="#ffff2a" stroke-width="3.0" /><line x1="1047.1" y1="403.1" x2="1403.0" y2="558.5" stroke="#ffff2a" stroke-width="1.3" /><line x1="1049.8" y1="422.6" x2="1403.0" y2="588.5" stroke="#ffff2a" stroke-width="1.3" /><polygon points="1403.0,546.0 1675.0,379.0 1672.0,406.0 1403.0,596.0" fill="#ffff00" opacity="0.45"/><polygon points="1407.6,554.1 1423.9,543.7 1423.7,574.7 1407.5,585.9" fill="#c89038" opacity="0.35"/><polygon points="1412.5,554.9 1419.1,550.7 1418.9,576.0 1412.4,580.5" fill="#24262c" opacity="0.85"/><polygon points="1432.4,538.4 1447.5,528.8 1447.0,558.5 1432.0,568.9" fill="#c89038" opacity="0.35"/><polygon points="1437.0,539.2 1443.0,535.3 1442.6,559.7 1436.6,563.8" fill="#24262c" opacity="0.85"/><polygon points="1455.4,523.8 1469.4,514.9 1468.6,543.5 1454.8,553.1" fill="#c89038" opacity="0.35"/><polygon points="1459.5,524.7 1465.1,521.1 1464.6,544.5 1459.0,548.4" fill="#24262c" opacity="0.85"/><polygon points="1476.6,510.3 1489.7,502.0 1488.8,529.6 1475.8,538.5" fill="#c89038" opacity="0.35"/><polygon points="1480.5,511.3 1485.7,507.9 1485.0,530.5 1479.8,534.0" fill="#24262c" opacity="0.85"/><polygon points="1496.4,497.8 1508.6,490.1 1507.5,516.6 1495.5,524.9" fill="#c89038" opacity="0.35"/><polygon points="1500.0,498.8 1504.9,495.7 1504.0,517.4 1499.2,520.7" fill="#24262c" opacity="0.85"/><polygon points="1514.9,486.0 1526.2,478.9 1525.0,504.4 1513.8,512.2" fill="#c89038" opacity="0.35"/><polygon points="1518.2,487.1 1522.7,484.2 1521.8,505.1 1517.3,508.2" fill="#24262c" opacity="0.85"/><polygon points="1532.2,475.1 1542.8,468.4 1541.4,493.0 1530.9,500.4" fill="#c89038" opacity="0.35"/><polygon points="1535.2,476.2 1539.5,473.5 1538.4,493.7 1534.2,496.6" fill="#24262c" opacity="0.85"/><polygon points="1548.3,464.9 1558.3,458.6 1556.8,482.4 1546.9,489.2" fill="#c89038" opacity="0.35"/><polygon points="1551.2,466.0 1555.1,463.4 1554.0,482.9 1550.0,485.6" fill="#24262c" opacity="0.85"/><polygon points="1563.5,455.3 1572.8,449.3 1571.3,472.3 1562.0,478.8" fill="#c89038" opacity="0.35"/><polygon points="1566.1,456.4 1569.9,454.0 1568.6,472.8 1564.9,475.4" fill="#24262c" opacity="0.85"/><polygon points="1577.7,446.2 1586.5,440.6 1584.9,462.9 1576.2,469.0" fill="#c89038" opacity="0.35"/><polygon points="1580.2,447.3 1583.7,445.1 1582.4,463.3 1578.9,465.7" fill="#24262c" opacity="0.85"/><polygon points="1591.2,437.7 1599.5,432.4 1597.8,454.0 1589.5,459.7" fill="#c89038" opacity="0.35"/><polygon points="1593.5,438.8 1596.8,436.7 1595.4,454.3 1592.1,456.6" fill="#24262c" opacity="0.85"/><polygon points="1603.8,429.7 1611.7,424.7 1610.0,445.5 1602.1,451.0" fill="#c89038" opacity="0.35"/><polygon points="1606.0,430.8 1609.1,428.8 1607.7,445.8 1604.6,448.0" fill="#24262c" opacity="0.85"/><polygon points="1615.8,422.1 1623.2,417.3 1621.5,437.5 1614.1,442.7" fill="#c89038" opacity="0.35"/><polygon points="1617.8,423.2 1620.8,421.3 1619.4,437.8 1616.4,439.8" fill="#24262c" opacity="0.85"/><polygon points="1627.1,414.9 1634.2,410.4 1632.4,430.0 1625.4,434.9" fill="#c89038" opacity="0.35"/><polygon points="1629.1,416.0 1631.9,414.2 1630.4,430.2 1627.6,432.1" fill="#24262c" opacity="0.85"/><polygon points="1637.9,408.1 1644.6,403.8 1642.7,422.8 1636.1,427.4" fill="#c89038" opacity="0.35"/><polygon points="1639.7,409.2 1642.4,407.5 1640.9,423.0 1638.2,424.8" fill="#24262c" opacity="0.85"/><polygon points="1648.1,401.6 1654.5,397.5 1652.6,416.0 1646.2,420.4" fill="#c89038" opacity="0.35"/><polygon points="1649.8,402.7 1652.3,401.1 1650.8,416.1 1648.3,417.9" fill="#24262c" opacity="0.85"/><polygon points="1657.8,395.4 1663.9,391.6 1662.0,409.5 1655.9,413.7" fill="#c89038" opacity="0.35"/><polygon points="1659.4,396.5 1661.8,395.0 1660.3,409.6 1657.9,411.3" fill="#24262c" opacity="0.85"/><polygon points="1667.0,389.6 1672.8,385.9 1670.9,403.3 1665.1,407.3" fill="#c89038" opacity="0.35"/><polygon points="1668.6,390.7 1670.9,389.2 1669.3,403.4 1667.0,405.0" fill="#24262c" opacity="0.85"/><line x1="1403.0" y1="546.0" x2="1403.0" y2="596.0" stroke="#ffff2a" stroke-width="2.2" /><line x1="1428.3" y1="530.5" x2="1427.8" y2="578.5" stroke="#ffff2a" stroke-width="2.2" /><line x1="1451.6" y1="516.1" x2="1450.8" y2="562.2" stroke="#ffff2a" stroke-width="2.2" /><line x1="1473.3" y1="502.8" x2="1472.1" y2="547.2" stroke="#ffff2a" stroke-width="2.2" /><line x1="1493.4" y1="490.5" x2="1491.9" y2="533.2" stroke="#ffff2a" stroke-width="2.2" /><line x1="1512.1" y1="479.0" x2="1510.4" y2="520.1" stroke="#ffff2a" stroke-width="2.2" /><line x1="1529.6" y1="468.2" x2="1527.7" y2="507.9" stroke="#ffff2a" stroke-width="2.2" /><line x1="1546.0" y1="458.2" x2="1543.9" y2="496.5" stroke="#ffff2a" stroke-width="2.2" /><line x1="1561.4" y1="448.8" x2="1559.1" y2="485.7" stroke="#ffff2a" stroke-width="2.2" /><line x1="1575.8" y1="439.9" x2="1573.4" y2="475.6" stroke="#ffff2a" stroke-width="2.2" /><line x1="1589.4" y1="431.5" x2="1586.9" y2="466.1" stroke="#ffff2a" stroke-width="2.2" /><line x1="1602.2" y1="423.7" x2="1599.6" y2="457.1" stroke="#ffff2a" stroke-width="2.2" /><line x1="1614.4" y1="416.2" x2="1611.6" y2="448.6" stroke="#ffff2a" stroke-width="2.2" /><line x1="1625.8" y1="409.2" x2="1623.0" y2="440.6" stroke="#ffff2a" stroke-width="2.2" /><line x1="1636.7" y1="402.5" x2="1633.8" y2="433.0" stroke="#ffff2a" stroke-width="2.2" /><line x1="1647.0" y1="396.2" x2="1644.1" y2="425.7" stroke="#ffff2a" stroke-width="2.2" /><line x1="1656.8" y1="390.2" x2="1653.9" y2="418.8" stroke="#ffff2a" stroke-width="2.2" /><line x1="1666.1" y1="384.5" x2="1663.1" y2="412.3" stroke="#ffff2a" stroke-width="2.2" /><line x1="1675.0" y1="379.0" x2="1672.0" y2="406.0" stroke="#ffff2a" stroke-width="2.2" /><line x1="1403.0" y1="546.0" x2="1675.0" y2="379.0" stroke="#ffff70" stroke-width="3.0" /><line x1="1403.0" y1="596.0" x2="1672.0" y2="406.0" stroke="#ffff2a" stroke-width="3.0" /><line x1="1403.0" y1="557.0" x2="1674.3" y2="384.9" stroke="#ffff2a" stroke-width="1.3" /><line x1="1403.0" y1="589.0" x2="1672.4" y2="402.2" stroke="#ffff2a" stroke-width="1.3" /><polygon points="1088.1,387.7 1429.8,518.5 1429.3,565.0 1092.1,418.9" fill="#ffff00" opacity="0.25"/><line x1="1088.1" y1="387.7" x2="1429.8" y2="518.5" stroke="#ffff2a" stroke-width="2.6" /><line x1="1092.1" y1="418.9" x2="1429.3" y2="565.0" stroke="#ffff2a" stroke-width="2.3400000000000003" /><line x1="1088.1" y1="387.7" x2="1092.1" y2="418.9" stroke="#ffff2a" stroke-width="2.08" /><line x1="1429.8" y1="518.5" x2="1429.3" y2="565.0" stroke="#ffff2a" stroke-width="2.08" /><line x1="1095.5" y1="390.5" x2="1099.5" y2="422.1" stroke="#ffff2a" stroke-width="1.9" /><line x1="1103.2" y1="393.4" x2="1107.1" y2="425.4" stroke="#ffff2a" stroke-width="1.9" /><line x1="1111.0" y1="396.4" x2="1114.9" y2="428.8" stroke="#ffff2a" stroke-width="1.9" /><line x1="1119.0" y1="399.5" x2="1122.8" y2="432.3" stroke="#ffff2a" stroke-width="1.9" /><line x1="1127.2" y1="402.7" x2="1131.0" y2="435.8" stroke="#ffff2a" stroke-width="1.9" /><line x1="1135.7" y1="405.9" x2="1139.4" y2="439.4" stroke="#ffff2a" stroke-width="1.9" /><line x1="1144.3" y1="409.2" x2="1147.9" y2="443.1" stroke="#ffff2a" stroke-width="1.9" /><line x1="1153.2" y1="412.6" x2="1156.7" y2="446.9" stroke="#ffff2a" stroke-width="1.9" /><line x1="1162.3" y1="416.1" x2="1165.8" y2="450.8" stroke="#ffff2a" stroke-width="1.9" /><line x1="1171.6" y1="419.6" x2="1175.0" y2="454.9" stroke="#ffff2a" stroke-width="1.9" /><line x1="1181.2" y1="423.3" x2="1184.5" y2="459.0" stroke="#ffff2a" stroke-width="1.9" /><line x1="1191.1" y1="427.1" x2="1194.3" y2="463.2" stroke="#ffff2a" stroke-width="1.9" /><line x1="1201.2" y1="431.0" x2="1204.3" y2="467.6" stroke="#ffff2a" stroke-width="1.9" /><line x1="1211.6" y1="435.0" x2="1214.6" y2="472.0" stroke="#ffff2a" stroke-width="1.9" /><line x1="1222.3" y1="439.1" x2="1225.2" y2="476.6" stroke="#ffff2a" stroke-width="1.9" /><line x1="1233.3" y1="443.3" x2="1236.1" y2="481.3" stroke="#ffff2a" stroke-width="1.9" /><line x1="1244.7" y1="447.6" x2="1247.3" y2="486.2" stroke="#ffff2a" stroke-width="1.9" /><line x1="1256.4" y1="452.1" x2="1258.9" y2="491.2" stroke="#ffff2a" stroke-width="1.9" /><line x1="1268.4" y1="456.7" x2="1270.8" y2="496.3" stroke="#ffff2a" stroke-width="1.9" /><line x1="1280.8" y1="461.5" x2="1283.0" y2="501.6" stroke="#ffff2a" stroke-width="1.9" /><line x1="1293.6" y1="466.4" x2="1295.6" y2="507.1" stroke="#ffff2a" stroke-width="1.9" /><line x1="1306.8" y1="471.4" x2="1308.6" y2="512.7" stroke="#ffff2a" stroke-width="1.9" /><line x1="1320.5" y1="476.6" x2="1322.0" y2="518.5" stroke="#ffff2a" stroke-width="1.9" /><line x1="1334.5" y1="482.0" x2="1335.9" y2="524.5" stroke="#ffff2a" stroke-width="1.9" /><line x1="1349.1" y1="487.6" x2="1350.2" y2="530.7" stroke="#ffff2a" stroke-width="1.9" /><line x1="1364.1" y1="493.3" x2="1365.0" y2="537.1" stroke="#ffff2a" stroke-width="1.9" /><line x1="1379.7" y1="499.3" x2="1380.2" y2="543.7" stroke="#ffff2a" stroke-width="1.9" /><line x1="1395.8" y1="505.5" x2="1396.0" y2="550.6" stroke="#ffff2a" stroke-width="1.9" /><line x1="1412.5" y1="511.9" x2="1412.4" y2="557.7" stroke="#ffff2a" stroke-width="1.9" /><polygon points="1082.8,401.2 1377.5,325.2 1378.3,346.1 1087.0,434.4" fill="#ffff00" opacity="0.25"/><line x1="1082.8" y1="401.2" x2="1377.5" y2="325.2" stroke="#ffff2a" stroke-width="2.6" /><line x1="1087.0" y1="434.4" x2="1378.3" y2="346.1" stroke="#ffff2a" stroke-width="2.3400000000000003" /><line x1="1082.8" y1="401.2" x2="1087.0" y2="434.4" stroke="#ffff2a" stroke-width="2.08" /><line x1="1377.5" y1="325.2" x2="1378.3" y2="346.1" stroke="#ffff2a" stroke-width="2.08" /><line x1="1096.8" y1="397.6" x2="1100.8" y2="430.2" stroke="#ffff2a" stroke-width="1.9" /><line x1="1110.4" y1="394.1" x2="1114.2" y2="426.1" stroke="#ffff2a" stroke-width="1.9" /><line x1="1123.5" y1="390.7" x2="1127.2" y2="422.2" stroke="#ffff2a" stroke-width="1.9" /><line x1="1136.4" y1="387.4" x2="1139.8" y2="418.3" stroke="#ffff2a" stroke-width="1.9" /><line x1="1148.8" y1="384.2" x2="1152.1" y2="414.6" stroke="#ffff2a" stroke-width="1.9" /><line x1="1161.0" y1="381.0" x2="1164.1" y2="411.0" stroke="#ffff2a" stroke-width="1.9" /><line x1="1172.8" y1="378.0" x2="1175.8" y2="407.5" stroke="#ffff2a" stroke-width="1.9" /><line x1="1184.3" y1="375.0" x2="1187.1" y2="404.0" stroke="#ffff2a" stroke-width="1.9" /><line x1="1195.5" y1="372.2" x2="1198.2" y2="400.7" stroke="#ffff2a" stroke-width="1.9" /><line x1="1206.4" y1="369.3" x2="1208.9" y2="397.4" stroke="#ffff2a" stroke-width="1.9" /><line x1="1217.0" y1="366.6" x2="1219.4" y2="394.2" stroke="#ffff2a" stroke-width="1.9" /><line x1="1227.3" y1="363.9" x2="1229.7" y2="391.1" stroke="#ffff2a" stroke-width="1.9" /><line x1="1237.4" y1="361.3" x2="1239.7" y2="388.1" stroke="#ffff2a" stroke-width="1.9" /><line x1="1247.3" y1="358.8" x2="1249.4" y2="385.1" stroke="#ffff2a" stroke-width="1.9" /><line x1="1256.9" y1="356.3" x2="1258.9" y2="382.3" stroke="#ffff2a" stroke-width="1.9" /><line x1="1266.3" y1="353.9" x2="1268.2" y2="379.4" stroke="#ffff2a" stroke-width="1.9" /><line x1="1275.5" y1="351.5" x2="1277.3" y2="376.7" stroke="#ffff2a" stroke-width="1.9" /><line x1="1284.4" y1="349.2" x2="1286.1" y2="374.0" stroke="#ffff2a" stroke-width="1.9" /><line x1="1293.2" y1="347.0" x2="1294.8" y2="371.4" stroke="#ffff2a" stroke-width="1.9" /><line x1="1301.7" y1="344.8" x2="1303.2" y2="368.8" stroke="#ffff2a" stroke-width="1.9" /><line x1="1310.0" y1="342.6" x2="1311.5" y2="366.3" stroke="#ffff2a" stroke-width="1.9" /><line x1="1318.2" y1="340.5" x2="1319.6" y2="363.9" stroke="#ffff2a" stroke-width="1.9" /><line x1="1326.2" y1="338.4" x2="1327.5" y2="361.5" stroke="#ffff2a" stroke-width="1.9" /><line x1="1334.0" y1="336.4" x2="1335.2" y2="359.1" stroke="#ffff2a" stroke-width="1.9" /><line x1="1341.6" y1="334.5" x2="1342.8" y2="356.8" stroke="#ffff2a" stroke-width="1.9" /><line x1="1349.1" y1="332.5" x2="1350.2" y2="354.6" stroke="#ffff2a" stroke-width="1.9" /><line x1="1356.4" y1="330.7" x2="1357.5" y2="352.4" stroke="#ffff2a" stroke-width="1.9" /><line x1="1363.6" y1="328.8" x2="1364.6" y2="350.2" stroke="#ffff2a" stroke-width="1.9" /><line x1="1370.6" y1="327.0" x2="1371.5" y2="348.1" stroke="#ffff2a" stroke-width="1.9" /><polygon points="1382.5,514.7 1633.4,377.3 1631.0,404.3 1382.9,561.0" fill="#ffff00" opacity="0.25"/><line x1="1382.5" y1="514.7" x2="1633.4" y2="377.3" stroke="#ffff2a" stroke-width="2.6" /><line x1="1382.9" y1="561.0" x2="1631.0" y2="404.3" stroke="#ffff2a" stroke-width="2.3400000000000003" /><line x1="1382.5" y1="514.7" x2="1382.9" y2="561.0" stroke="#ffff2a" stroke-width="2.08" /><line x1="1633.4" y1="377.3" x2="1631.0" y2="404.3" stroke="#ffff2a" stroke-width="2.08" /><line x1="1397.7" y1="506.3" x2="1397.9" y2="551.6" stroke="#ffff2a" stroke-width="1.9" /><line x1="1412.2" y1="498.4" x2="1412.2" y2="542.5" stroke="#ffff2a" stroke-width="1.9" /><line x1="1426.1" y1="490.8" x2="1425.9" y2="533.9" stroke="#ffff2a" stroke-width="1.9" /><line x1="1439.4" y1="483.5" x2="1439.0" y2="525.6" stroke="#ffff2a" stroke-width="1.9" /><line x1="1452.2" y1="476.5" x2="1451.5" y2="517.7" stroke="#ffff2a" stroke-width="1.9" /><line x1="1464.4" y1="469.8" x2="1463.5" y2="510.1" stroke="#ffff2a" stroke-width="1.9" /><line x1="1476.1" y1="463.4" x2="1475.1" y2="502.8" stroke="#ffff2a" stroke-width="1.9" /><line x1="1487.3" y1="457.3" x2="1486.2" y2="495.8" stroke="#ffff2a" stroke-width="1.9" /><line x1="1498.1" y1="451.4" x2="1496.9" y2="489.0" stroke="#ffff2a" stroke-width="1.9" /><line x1="1508.5" y1="445.7" x2="1507.2" y2="482.5" stroke="#ffff2a" stroke-width="1.9" /><line x1="1518.5" y1="440.2" x2="1517.0" y2="476.3" stroke="#ffff2a" stroke-width="1.9" /><line x1="1528.2" y1="434.9" x2="1526.6" y2="470.3" stroke="#ffff2a" stroke-width="1.9" /><line x1="1537.5" y1="429.8" x2="1535.8" y2="464.5" stroke="#ffff2a" stroke-width="1.9" /><line x1="1546.4" y1="424.9" x2="1544.6" y2="458.9" stroke="#ffff2a" stroke-width="1.9" /><line x1="1555.1" y1="420.2" x2="1553.2" y2="453.5" stroke="#ffff2a" stroke-width="1.9" /><line x1="1563.4" y1="415.6" x2="1561.5" y2="448.2" stroke="#ffff2a" stroke-width="1.9" /><line x1="1571.5" y1="411.2" x2="1569.5" y2="443.2" stroke="#ffff2a" stroke-width="1.9" /><line x1="1579.3" y1="407.0" x2="1577.2" y2="438.3" stroke="#ffff2a" stroke-width="1.9" /><line x1="1586.8" y1="402.8" x2="1584.7" y2="433.6" stroke="#ffff2a" stroke-width="1.9" /><line x1="1594.1" y1="398.8" x2="1591.9" y2="429.0" stroke="#ffff2a" stroke-width="1.9" /><line x1="1601.2" y1="395.0" x2="1599.0" y2="424.6" stroke="#ffff2a" stroke-width="1.9" /><line x1="1608.0" y1="391.2" x2="1605.8" y2="420.3" stroke="#ffff2a" stroke-width="1.9" /><line x1="1614.7" y1="387.6" x2="1612.4" y2="416.1" stroke="#ffff2a" stroke-width="1.9" /><line x1="1621.1" y1="384.1" x2="1618.8" y2="412.0" stroke="#ffff2a" stroke-width="1.9" /><line x1="1627.4" y1="380.6" x2="1625.0" y2="408.1" stroke="#ffff2a" stroke-width="1.9" /><polygon points="1356.5,325.1 1642.4,381.7 1639.8,409.2 1357.5,346.0" fill="#ffff00" opacity="0.25"/><line x1="1356.5" y1="325.1" x2="1642.4" y2="381.7" stroke="#ffff2a" stroke-width="2.6" /><line x1="1357.5" y1="346.0" x2="1639.8" y2="409.2" stroke="#ffff2a" stroke-width="2.3400000000000003" /><line x1="1356.5" y1="325.1" x2="1357.5" y2="346.0" stroke="#ffff2a" stroke-width="2.08" /><line x1="1642.4" y1="381.7" x2="1639.8" y2="409.2" stroke="#ffff2a" stroke-width="2.08" /><line x1="1364.9" y1="326.7" x2="1365.9" y2="347.9" stroke="#ffff2a" stroke-width="1.9" /><line x1="1373.5" y1="328.4" x2="1374.4" y2="349.8" stroke="#ffff2a" stroke-width="1.9" /><line x1="1382.2" y1="330.2" x2="1383.0" y2="351.7" stroke="#ffff2a" stroke-width="1.9" /><line x1="1391.1" y1="331.9" x2="1391.8" y2="353.7" stroke="#ffff2a" stroke-width="1.9" /><line x1="1400.2" y1="333.7" x2="1400.8" y2="355.7" stroke="#ffff2a" stroke-width="1.9" /><line x1="1409.5" y1="335.6" x2="1410.0" y2="357.7" stroke="#ffff2a" stroke-width="1.9" /><line x1="1418.9" y1="337.4" x2="1419.3" y2="359.8" stroke="#ffff2a" stroke-width="1.9" /><line x1="1428.5" y1="339.3" x2="1428.9" y2="362.0" stroke="#ffff2a" stroke-width="1.9" /><line x1="1438.4" y1="341.3" x2="1438.6" y2="364.2" stroke="#ffff2a" stroke-width="1.9" /><line x1="1448.4" y1="343.3" x2="1448.5" y2="366.4" stroke="#ffff2a" stroke-width="1.9" /><line x1="1458.6" y1="345.3" x2="1458.6" y2="368.6" stroke="#ffff2a" stroke-width="1.9" /><line x1="1469.1" y1="347.4" x2="1469.0" y2="371.0" stroke="#ffff2a" stroke-width="1.9" /><line x1="1479.7" y1="349.5" x2="1479.5" y2="373.3" stroke="#ffff2a" stroke-width="1.9" /><line x1="1490.7" y1="351.6" x2="1490.3" y2="375.7" stroke="#ffff2a" stroke-width="1.9" /><line x1="1501.8" y1="353.8" x2="1501.3" y2="378.2" stroke="#ffff2a" stroke-width="1.9" /><line x1="1513.2" y1="356.1" x2="1512.5" y2="380.7" stroke="#ffff2a" stroke-width="1.9" /><line x1="1524.8" y1="358.4" x2="1524.0" y2="383.3" stroke="#ffff2a" stroke-width="1.9" /><line x1="1536.7" y1="360.8" x2="1535.7" y2="385.9" stroke="#ffff2a" stroke-width="1.9" /><line x1="1548.9" y1="363.2" x2="1547.7" y2="388.6" stroke="#ffff2a" stroke-width="1.9" /><line x1="1561.3" y1="365.6" x2="1560.0" y2="391.3" stroke="#ffff2a" stroke-width="1.9" /><line x1="1574.0" y1="368.2" x2="1572.5" y2="394.2" stroke="#ffff2a" stroke-width="1.9" /><line x1="1587.1" y1="370.7" x2="1585.4" y2="397.0" stroke="#ffff2a" stroke-width="1.9" /><line x1="1600.4" y1="373.4" x2="1598.5" y2="400.0" stroke="#ffff2a" stroke-width="1.9" /><line x1="1614.1" y1="376.1" x2="1611.9" y2="403.0" stroke="#ffff2a" stroke-width="1.9" /><line x1="1628.1" y1="378.9" x2="1625.7" y2="406.1" stroke="#ffff2a" stroke-width="1.9" /><polygon points="1161.7,380.8 1441.2,473.8 1440.7,514.7 1164.9,410.8" fill="#ffff00" opacity="0.25"/><line x1="1161.7" y1="380.8" x2="1441.2" y2="473.8" stroke="#ffff2a" stroke-width="2.6" /><line x1="1164.9" y1="410.8" x2="1440.7" y2="514.7" stroke="#ffff2a" stroke-width="2.3400000000000003" /><line x1="1161.7" y1="380.8" x2="1164.9" y2="410.8" stroke="#ffff2a" stroke-width="2.08" /><line x1="1441.2" y1="473.8" x2="1440.7" y2="514.7" stroke="#ffff2a" stroke-width="2.08" /><line x1="1174.4" y1="385.1" x2="1177.5" y2="415.5" stroke="#ffff2a" stroke-width="1.9" /><line x1="1187.6" y1="389.5" x2="1190.6" y2="420.4" stroke="#ffff2a" stroke-width="1.9" /><line x1="1201.3" y1="394.0" x2="1204.1" y2="425.6" stroke="#ffff2a" stroke-width="1.9" /><line x1="1215.5" y1="398.7" x2="1218.2" y2="430.9" stroke="#ffff2a" stroke-width="1.9" /><line x1="1230.3" y1="403.6" x2="1232.8" y2="436.4" stroke="#ffff2a" stroke-width="1.9" /><line x1="1245.6" y1="408.8" x2="1248.0" y2="442.1" stroke="#ffff2a" stroke-width="1.9" /><line x1="1261.6" y1="414.1" x2="1263.8" y2="448.1" stroke="#ffff2a" stroke-width="1.9" /><line x1="1278.2" y1="419.6" x2="1280.3" y2="454.3" stroke="#ffff2a" stroke-width="1.9" /><line x1="1295.5" y1="425.4" x2="1297.4" y2="460.7" stroke="#ffff2a" stroke-width="1.9" /><line x1="1313.6" y1="431.4" x2="1315.2" y2="467.4" stroke="#ffff2a" stroke-width="1.9" /><line x1="1332.5" y1="437.7" x2="1333.9" y2="474.5" stroke="#ffff2a" stroke-width="1.9" /><line x1="1352.3" y1="444.3" x2="1353.4" y2="481.8" stroke="#ffff2a" stroke-width="1.9" /><line x1="1373.0" y1="451.1" x2="1373.7" y2="489.5" stroke="#ffff2a" stroke-width="1.9" /><line x1="1394.6" y1="458.4" x2="1395.0" y2="497.5" stroke="#ffff2a" stroke-width="1.9" /><line x1="1417.3" y1="465.9" x2="1417.3" y2="505.9" stroke="#ffff2a" stroke-width="1.9" /><polygon points="1191.2,373.2 1281.6,401.2 1283.6,433.3 1194.0,401.9" fill="#ffff00" opacity="0.25"/><line x1="1191.2" y1="373.2" x2="1281.6" y2="401.2" stroke="#ffff2a" stroke-width="2.6" /><line x1="1194.0" y1="401.9" x2="1283.6" y2="433.3" stroke="#ffff2a" stroke-width="2.3400000000000003" /><line x1="1191.2" y1="373.2" x2="1194.0" y2="401.9" stroke="#ffff2a" stroke-width="2.08" /><line x1="1281.6" y1="401.2" x2="1283.6" y2="433.3" stroke="#ffff2a" stroke-width="2.08" /><line x1="1204.9" y1="377.5" x2="1207.5" y2="406.7" stroke="#ffff2a" stroke-width="1.9" /><line x1="1219.0" y1="381.8" x2="1221.6" y2="411.6" stroke="#ffff2a" stroke-width="1.9" /><line x1="1233.8" y1="386.4" x2="1236.2" y2="416.7" stroke="#ffff2a" stroke-width="1.9" /><line x1="1249.1" y1="391.1" x2="1251.4" y2="422.0" stroke="#ffff2a" stroke-width="1.9" /><line x1="1265.0" y1="396.1" x2="1267.2" y2="427.6" stroke="#ffff2a" stroke-width="1.9" /><polygon points="1291.7,347.3 1558.3,411.4 1556.5,443.5 1293.3,371.8" fill="#ffff00" opacity="0.25"/><line x1="1291.7" y1="347.3" x2="1558.3" y2="411.4" stroke="#ffff2a" stroke-width="2.6" /><line x1="1293.3" y1="371.8" x2="1556.5" y2="443.5" stroke="#ffff2a" stroke-width="2.3400000000000003" /><line x1="1291.7" y1="347.3" x2="1293.3" y2="371.8" stroke="#ffff2a" stroke-width="2.08" /><line x1="1558.3" y1="411.4" x2="1556.5" y2="443.5" stroke="#ffff2a" stroke-width="2.08" /><line x1="1306.3" y1="350.9" x2="1307.9" y2="375.8" stroke="#ffff2a" stroke-width="1.9" /><line x1="1321.5" y1="354.5" x2="1322.9" y2="379.9" stroke="#ffff2a" stroke-width="1.9" /><line x1="1337.3" y1="358.3" x2="1338.5" y2="384.1" stroke="#ffff2a" stroke-width="1.9" /><line x1="1353.6" y1="362.2" x2="1354.7" y2="388.5" stroke="#ffff2a" stroke-width="1.9" /><line x1="1370.6" y1="366.3" x2="1371.5" y2="393.1" stroke="#ffff2a" stroke-width="1.9" /><line x1="1388.2" y1="370.5" x2="1388.9" y2="397.8" stroke="#ffff2a" stroke-width="1.9" /><line x1="1406.6" y1="375.0" x2="1407.0" y2="402.8" stroke="#ffff2a" stroke-width="1.9" /><line x1="1425.6" y1="379.5" x2="1425.8" y2="407.9" stroke="#ffff2a" stroke-width="1.9" /><line x1="1445.5" y1="384.3" x2="1445.4" y2="413.2" stroke="#ffff2a" stroke-width="1.9" /><line x1="1466.1" y1="389.3" x2="1465.8" y2="418.8" stroke="#ffff2a" stroke-width="1.9" /><line x1="1487.7" y1="394.5" x2="1487.0" y2="424.6" stroke="#ffff2a" stroke-width="1.9" /><line x1="1510.2" y1="399.9" x2="1509.2" y2="430.6" stroke="#ffff2a" stroke-width="1.9" /><line x1="1533.7" y1="405.5" x2="1532.3" y2="436.9" stroke="#ffff2a" stroke-width="1.9" /><polygon points="1326.0,338.5 1587.2,396.1 1585.1,425.9 1327.3,361.5" fill="#ffff00" opacity="0.25"/><line x1="1326.0" y1="338.5" x2="1587.2" y2="396.1" stroke="#ffff2a" stroke-width="2.6" /><line x1="1327.3" y1="361.5" x2="1585.1" y2="425.9" stroke="#ffff2a" stroke-width="2.3400000000000003" /><line x1="1326.0" y1="338.5" x2="1327.3" y2="361.5" stroke="#ffff2a" stroke-width="2.08" /><line x1="1587.2" y1="396.1" x2="1585.1" y2="425.9" stroke="#ffff2a" stroke-width="2.08" /><line x1="1340.6" y1="341.7" x2="1341.8" y2="365.1" stroke="#ffff2a" stroke-width="1.9" /><line x1="1355.7" y1="345.0" x2="1356.7" y2="368.8" stroke="#ffff2a" stroke-width="1.9" /><line x1="1371.2" y1="348.5" x2="1372.1" y2="372.7" stroke="#ffff2a" stroke-width="1.9" /><line x1="1387.4" y1="352.0" x2="1388.1" y2="376.7" stroke="#ffff2a" stroke-width="1.9" /><line x1="1404.1" y1="355.7" x2="1404.6" y2="380.8" stroke="#ffff2a" stroke-width="1.9" /><line x1="1421.5" y1="359.5" x2="1421.8" y2="385.1" stroke="#ffff2a" stroke-width="1.9" /><line x1="1439.5" y1="363.5" x2="1439.6" y2="389.5" stroke="#ffff2a" stroke-width="1.9" /><line x1="1458.1" y1="367.6" x2="1458.0" y2="394.1" stroke="#ffff2a" stroke-width="1.9" /><line x1="1477.5" y1="371.9" x2="1477.2" y2="398.9" stroke="#ffff2a" stroke-width="1.9" /><line x1="1497.7" y1="376.4" x2="1497.1" y2="403.9" stroke="#ffff2a" stroke-width="1.9" /><line x1="1518.7" y1="381.0" x2="1517.8" y2="409.1" stroke="#ffff2a" stroke-width="1.9" /><line x1="1540.6" y1="385.8" x2="1539.3" y2="414.4" stroke="#ffff2a" stroke-width="1.9" /><line x1="1563.4" y1="390.8" x2="1561.7" y2="420.0" stroke="#ffff2a" stroke-width="1.9" /><polygon points="1160.8,411.1 1408.9,338.7 1409.4,361.3 1164.3,445.2" fill="#ffff00" opacity="0.25"/><line x1="1160.8" y1="411.1" x2="1408.9" y2="338.7" stroke="#ffff2a" stroke-width="2.6" /><line x1="1164.3" y1="445.2" x2="1409.4" y2="361.3" stroke="#ffff2a" stroke-width="2.3400000000000003" /><line x1="1160.8" y1="411.1" x2="1164.3" y2="445.2" stroke="#ffff2a" stroke-width="2.08" /><line x1="1408.9" y1="338.7" x2="1409.4" y2="361.3" stroke="#ffff2a" stroke-width="2.08" /><line x1="1181.9" y1="405.0" x2="1185.0" y2="438.1" stroke="#ffff2a" stroke-width="1.9" /><line x1="1202.0" y1="399.1" x2="1204.8" y2="431.3" stroke="#ffff2a" stroke-width="1.9" /><line x1="1221.1" y1="393.5" x2="1223.7" y2="424.9" stroke="#ffff2a" stroke-width="1.9" /><line x1="1239.5" y1="388.2" x2="1241.8" y2="418.7" stroke="#ffff2a" stroke-width="1.9" /><line x1="1257.0" y1="383.0" x2="1259.1" y2="412.8" stroke="#ffff2a" stroke-width="1.9" /><line x1="1273.7" y1="378.1" x2="1275.7" y2="407.1" stroke="#ffff2a" stroke-width="1.9" /><line x1="1289.8" y1="373.5" x2="1291.5" y2="401.7" stroke="#ffff2a" stroke-width="1.9" /><line x1="1305.2" y1="369.0" x2="1306.8" y2="396.5" stroke="#ffff2a" stroke-width="1.9" /><line x1="1320.0" y1="364.6" x2="1321.4" y2="391.5" stroke="#ffff2a" stroke-width="1.9" /><line x1="1334.2" y1="360.5" x2="1335.4" y2="386.7" stroke="#ffff2a" stroke-width="1.9" /><line x1="1347.8" y1="356.5" x2="1348.9" y2="382.0" stroke="#ffff2a" stroke-width="1.9" /><line x1="1361.0" y1="352.7" x2="1362.0" y2="377.6" stroke="#ffff2a" stroke-width="1.9" /><line x1="1373.6" y1="349.0" x2="1374.5" y2="373.3" stroke="#ffff2a" stroke-width="1.9" /><line x1="1385.8" y1="345.4" x2="1386.6" y2="369.2" stroke="#ffff2a" stroke-width="1.9" /><line x1="1397.6" y1="342.0" x2="1398.2" y2="365.2" stroke="#ffff2a" stroke-width="1.9" /><polygon points="1190.2,422.2 1269.1,397.3 1271.2,429.0 1193.4,457.6" fill="#ffff00" opacity="0.25"/><line x1="1190.2" y1="422.2" x2="1269.1" y2="397.3" stroke="#ffff2a" stroke-width="2.6" /><line x1="1193.4" y1="457.6" x2="1271.2" y2="429.0" stroke="#ffff2a" stroke-width="2.3400000000000003" /><line x1="1190.2" y1="422.2" x2="1193.4" y2="457.6" stroke="#ffff2a" stroke-width="2.08" /><line x1="1269.1" y1="397.3" x2="1271.2" y2="429.0" stroke="#ffff2a" stroke-width="2.08" /><line x1="1207.3" y1="416.8" x2="1210.2" y2="451.5" stroke="#ffff2a" stroke-width="1.9" /><line x1="1223.6" y1="411.6" x2="1226.3" y2="445.5" stroke="#ffff2a" stroke-width="1.9" /><line x1="1239.4" y1="406.7" x2="1241.9" y2="439.8" stroke="#ffff2a" stroke-width="1.9" /><line x1="1254.5" y1="401.9" x2="1256.8" y2="434.3" stroke="#ffff2a" stroke-width="1.9" /><polygon points="1346.5,481.0 1577.0,372.6 1575.4,399.2 1347.6,523.3" fill="#ffff00" opacity="0.25"/><line x1="1346.5" y1="481.0" x2="1577.0" y2="372.6" stroke="#ffff2a" stroke-width="2.6" /><line x1="1347.6" y1="523.3" x2="1575.4" y2="399.2" stroke="#ffff2a" stroke-width="2.3400000000000003" /><line x1="1346.5" y1="481.0" x2="1347.6" y2="523.3" stroke="#ffff2a" stroke-width="2.08" /><line x1="1577.0" y1="372.6" x2="1575.4" y2="399.2" stroke="#ffff2a" stroke-width="2.08" /><line x1="1367.4" y1="471.2" x2="1368.2" y2="512.1" stroke="#ffff2a" stroke-width="1.9" /><line x1="1387.1" y1="461.9" x2="1387.6" y2="501.6" stroke="#ffff2a" stroke-width="1.9" /><line x1="1405.6" y1="453.2" x2="1405.9" y2="491.6" stroke="#ffff2a" stroke-width="1.9" /><line x1="1423.2" y1="444.9" x2="1423.2" y2="482.2" stroke="#ffff2a" stroke-width="1.9" /><line x1="1439.8" y1="437.1" x2="1439.5" y2="473.2" stroke="#ffff2a" stroke-width="1.9" /><line x1="1455.5" y1="429.7" x2="1455.1" y2="464.8" stroke="#ffff2a" stroke-width="1.9" /><line x1="1470.5" y1="422.7" x2="1469.8" y2="456.7" stroke="#ffff2a" stroke-width="1.9" /><line x1="1484.7" y1="416.0" x2="1483.9" y2="449.1" stroke="#ffff2a" stroke-width="1.9" /><line x1="1498.2" y1="409.6" x2="1497.2" y2="441.8" stroke="#ffff2a" stroke-width="1.9" /><line x1="1511.0" y1="403.6" x2="1510.0" y2="434.8" stroke="#ffff2a" stroke-width="1.9" /><line x1="1523.3" y1="397.8" x2="1522.1" y2="428.2" stroke="#ffff2a" stroke-width="1.9" /><line x1="1535.0" y1="392.3" x2="1533.7" y2="421.9" stroke="#ffff2a" stroke-width="1.9" /><line x1="1546.2" y1="387.0" x2="1544.8" y2="415.8" stroke="#ffff2a" stroke-width="1.9" /><line x1="1556.9" y1="382.0" x2="1555.4" y2="410.0" stroke="#ffff2a" stroke-width="1.9" /><line x1="1567.2" y1="377.2" x2="1565.6" y2="404.5" stroke="#ffff2a" stroke-width="1.9" /><polygon points="1464.1,392.2 1533.1,363.7 1532.1,389.3 1463.8,422.1" fill="#ffff00" opacity="0.25"/><line x1="1464.1" y1="392.2" x2="1533.1" y2="363.7" stroke="#ffff2a" stroke-width="2.6" /><line x1="1463.8" y1="422.1" x2="1532.1" y2="389.3" stroke="#ffff2a" stroke-width="2.3400000000000003" /><line x1="1464.1" y1="392.2" x2="1463.8" y2="422.1" stroke="#ffff2a" stroke-width="2.08" /><line x1="1533.1" y1="363.7" x2="1532.1" y2="389.3" stroke="#ffff2a" stroke-width="2.08" /><line x1="1476.9" y1="386.9" x2="1476.4" y2="416.0" stroke="#ffff2a" stroke-width="1.9" /><line x1="1489.1" y1="381.9" x2="1488.5" y2="410.2" stroke="#ffff2a" stroke-width="1.9" /><line x1="1500.8" y1="377.0" x2="1500.1" y2="404.7" stroke="#ffff2a" stroke-width="1.9" /><line x1="1512.0" y1="372.4" x2="1511.2" y2="399.3" stroke="#ffff2a" stroke-width="1.9" /><line x1="1522.8" y1="368.0" x2="1521.9" y2="394.2" stroke="#ffff2a" stroke-width="1.9" /><polygon points="1246.3,443.3 1295.5,425.4 1297.4,460.7 1248.9,481.3" fill="#ffff00" opacity="0.25"/><line x1="1246.3" y1="443.3" x2="1295.5" y2="425.4" stroke="#ffff2a" stroke-width="2.6" /><line x1="1248.9" y1="481.3" x2="1297.4" y2="460.7" stroke="#ffff2a" stroke-width="2.3400000000000003" /><line x1="1246.3" y1="443.3" x2="1248.9" y2="481.3" stroke="#ffff2a" stroke-width="2.08" /><line x1="1295.5" y1="425.4" x2="1297.4" y2="460.7" stroke="#ffff2a" stroke-width="2.08" /><line x1="1263.4" y1="437.1" x2="1265.8" y2="474.1" stroke="#ffff2a" stroke-width="1.9" /><line x1="1279.8" y1="431.1" x2="1281.9" y2="467.3" stroke="#ffff2a" stroke-width="1.9" /><polygon points="1251.9,355.0 1305.2,369.0 1306.8,396.5 1253.9,380.8" fill="#ffff00" opacity="0.25"/><line x1="1251.9" y1="355.0" x2="1305.2" y2="369.0" stroke="#ffff2a" stroke-width="2.6" /><line x1="1253.9" y1="380.8" x2="1306.8" y2="396.5" stroke="#ffff2a" stroke-width="2.3400000000000003" /><line x1="1251.9" y1="355.0" x2="1253.9" y2="380.8" stroke="#ffff2a" stroke-width="2.08" /><line x1="1305.2" y1="369.0" x2="1306.8" y2="396.5" stroke="#ffff2a" stroke-width="2.08" /><line x1="1264.6" y1="358.3" x2="1266.5" y2="384.5" stroke="#ffff2a" stroke-width="1.9" /><line x1="1277.7" y1="361.7" x2="1279.5" y2="388.4" stroke="#ffff2a" stroke-width="1.9" /><line x1="1291.2" y1="365.3" x2="1292.9" y2="392.3" stroke="#ffff2a" stroke-width="1.9" /><polygon points="1217.2,381.3 1312.1,355.1 1313.6,380.6 1219.8,411.0" fill="#ffff00" opacity="0.25"/><line x1="1217.2" y1="381.3" x2="1312.1" y2="355.1" stroke="#ffff2a" stroke-width="2.6" /><line x1="1219.8" y1="411.0" x2="1313.6" y2="380.6" stroke="#ffff2a" stroke-width="2.3400000000000003" /><line x1="1217.2" y1="381.3" x2="1219.8" y2="411.0" stroke="#ffff2a" stroke-width="2.08" /><line x1="1312.1" y1="355.1" x2="1313.6" y2="380.6" stroke="#ffff2a" stroke-width="2.08" /><line x1="1238.2" y1="375.5" x2="1240.4" y2="404.3" stroke="#ffff2a" stroke-width="1.9" /><line x1="1258.0" y1="370.0" x2="1260.1" y2="397.9" stroke="#ffff2a" stroke-width="1.9" /><line x1="1276.9" y1="364.8" x2="1278.8" y2="391.9" stroke="#ffff2a" stroke-width="1.9" /><line x1="1295.0" y1="359.9" x2="1296.6" y2="386.1" stroke="#ffff2a" stroke-width="1.9" /><line x1="1046.0" y1="395.0" x2="1360.0" y2="319.0" stroke="#ffff70" stroke-width="2.6" /><line x1="1360.0" y1="319.0" x2="1675.0" y2="379.0" stroke="#ffff70" stroke-width="2.6" /><line x1="1046.0" y1="395.0" x2="1403.0" y2="546.0" stroke="#ffff70" stroke-width="2.8" /><line x1="1403.0" y1="546.0" x2="1675.0" y2="379.0" stroke="#ffff70" stroke-width="2.8" /><line x1="1050.5" y1="427.5" x2="1403.0" y2="596.0" stroke="#ffff70" stroke-width="3.2" /><line x1="1403.0" y1="596.0" x2="1672.0" y2="406.0" stroke="#ffff70" stroke-width="3.4" /><line x1="1046.0" y1="395.0" x2="1050.5" y2="427.5" stroke="#ffff70" stroke-width="2.4" /><line x1="1403.0" y1="546.0" x2="1403.0" y2="596.0" stroke="#ffff70" stroke-width="2.8" /><line x1="1675.0" y1="379.0" x2="1672.0" y2="406.0" stroke="#ffff70" stroke-width="2.4" /><line x1="1398.0" y1="398.0" x2="1398.0" y2="440.0" stroke="#d8b820" stroke-width="1.1" /><line x1="1406.0" y1="398.0" x2="1406.0" y2="440.0" stroke="#d8b820" stroke-width="1.1" /><line x1="1428.0" y1="398.0" x2="1428.0" y2="440.0" stroke="#d8b820" stroke-width="1.1" /><line x1="1436.0" y1="398.0" x2="1436.0" y2="440.0" stroke="#d8b820" stroke-width="1.1" /><line x1="1193.0" y1="340.0" x2="1193.0" y2="355.5" stroke="#1010ff" stroke-width="1.6" /><line x1="1193.0" y1="355.5" x2="1182.0" y2="358.5" stroke="#ff1010" stroke-width="1.6" /><line x1="1193.0" y1="355.5" x2="1203.0" y2="358.0" stroke="#10e010" stroke-width="1.6" /></svg>
<!--/BUILDING-->
<div class="a" style="left:948px;top:36px;width:32px;height:32px;background:#535353"></div>
<svg style="left:948px;top:36px" width="32" height="32" viewBox="0 0 32 32">
  <path d="M8 12V7h5.5M19 7h5.5v5M24.5 19v5.5H19M13.5 24.5H8V19" stroke="#eee" stroke-width="1.4" fill="none"/>
  <path d="M16.3 12l3.6 2.1v4.2l-3.6 2.1-3.6-2.1v-4.2z" fill="#ddd"/>
</svg>

<!-- NAV CUBE -->
<svg style="left:0;top:0" width="1845" height="819">
  <defs><linearGradient id="cg" x1="0" y1="0" x2="0" y2="1"><stop offset="0" stop-color="#fafafa"/><stop offset="1" stop-color="#f0f0f0"/></linearGradient></defs>
  <polygon points="1692.2,84.8 1730.4,80.1 1770.7,84.2 1734.5,92" fill="#fbfbfb" stroke="#3a3a3a" stroke-width="1.2" stroke-linejoin="round"/>
  <polygon points="1692.2,84.8 1734.5,92 1734.5,156.4 1696.9,134.5" fill="#fff" stroke="#3a3a3a" stroke-width="1.2" stroke-linejoin="round"/>
  <polygon points="1734.5,92 1770.7,84.2 1766.4,133.2 1734.5,156.4" fill="#fff" stroke="#3a3a3a" stroke-width="1.2" stroke-linejoin="round"/>
  <text x="0" y="0" font-family="Liberation Sans" font-size="10.5" fill="#9a9a9a" transform="translate(1701.5,119) rotate(17) scale(0.72,1.45)">Справа</text>
  <text x="0" y="0" font-family="Liberation Sans" font-size="10.5" fill="#9a9a9a" transform="translate(1745,128.5) rotate(-30) scale(0.62,1.45)">Сзади</text>
  <!-- gizmo -->
  <circle cx="998.2" cy="703" r="46.3" fill="#666"/>
  <line x1="998" y1="702" x2="998" y2="682" stroke="#0a0aff" stroke-width="1.6"/>
  <polygon points="998,674 995.5,684 1000.5,684" fill="#0a0aff"/>
  <text x="997.5" y="669.5" font-family="Liberation Sans" font-size="9.5" font-weight="bold" fill="#0a0aff">Z</text>
  <line x1="997" y1="704" x2="982" y2="709" stroke="#ff0a0a" stroke-width="1.6"/>
  <polygon points="976,711 984,705 985,711" fill="#ff0a0a"/>
  <text x="970" y="714" font-family="Liberation Sans" font-size="9.5" fill="#ff0a0a" stroke="#ff0a0a" stroke-width="0.4">X</text>
  <line x1="999" y1="704" x2="1014" y2="708" stroke="#10f010" stroke-width="1.6"/>
  <polygon points="1022,710 1013,705 1012,711" fill="#10f010"/>
  <text x="1028.5" y="712.5" font-family="Liberation Sans" font-size="9.5" fill="#10f010" stroke="#10f010" stroke-width="0.4">Y</text>
  <circle cx="998" cy="703" r="3.5" fill="#bdbdbd"/>
</svg>

<!-- RED ARROWS -->
<svg style="left:0;top:0" width="1845" height="819">
  <defs><filter id="sh" x="-30%" y="-80%" width="160%" height="260%"><feGaussianBlur stdDeviation="1.6"/></filter></defs>
  <g fill="#6a6a6a" opacity="0.55" filter="url(#sh)" transform="translate(2.5,4)">
    <path d="M701.7,199.4L714.7,189.8L715.5,193.3L773.4,185.2L774.2,188.2L716.5,199.5L717.6,203.9Z"/>
    <path d="M708.4,297.1L720.6,288.3L721.5,292L769,285.3L769.8,288.3L722.6,297.7L723.6,301.7Z"/>
    <path d="M652.2,369.1L665,360.6L665.8,364L712.2,358L713,361L666.4,369.8L666.9,373.8Z"/>
  </g>
  <g fill="#c80000">
    <path d="M701.7,199.4L714.7,189.8L715.5,193.3L773.4,185.2L774.2,188.2L716.5,199.5L717.6,203.9Z"/>
    <path d="M708.4,297.1L720.6,288.3L721.5,292L769,285.3L769.8,288.3L722.6,297.7L723.6,301.7Z"/>
    <path d="M652.2,369.1L665,360.6L665.8,364L712.2,358L713,361L666.4,369.8L666.9,373.8Z"/>
  </g>
</svg>

<!-- RIGHT TOOLBAR -->
<div class="a" style="left:1807px;top:36px;width:36px;height:775px;background:#535353"></div>
<div class="a" style="left:1843px;top:28px;width:2px;height:791px;background:#6a6a70"></div>
<div class="a" style="left:1807px;top:128px;width:36px;height:1px;background:#6b6b6b"></div>
<div class="a" style="left:1807px;top:397px;width:36px;height:1px;background:#6b6b6b"></div>
<div class="a" style="left:1807px;top:446px;width:36px;height:1px;background:#6b6b6b"></div>
<div class="a" style="left:1807px;top:627px;width:36px;height:1px;background:#6b6b6b"></div>
<div class="a" style="left:1807px;top:720px;width:36px;height:1px;background:#6b6b6b"></div>
<div class="a" style="left:1809px;top:636px;width:32px;height:32px;background:#8a8a8a"></div>
<div class="a" style="left:1809px;top:680px;width:32px;height:32px;background:#8a8a8a"></div>
<svg style="left:0;top:0" width="1845" height="819">
  <!-- cloud tree -->
  <path class="ic" d="M1821 68c-4 0-7-2.5-7-6 0-3 2-5 4.5-5.5.3-4.5 3.5-7.5 7-7.5s6.7 3 7 7.5c2.5.5 4.5 2.5 4.5 5.5 0 3.5-3 6-7 6M1825.3 56v16M1825.3 63l-3.5-3M1825.3 66l4-3.5" stroke-width="1.4"/>
  <!-- screen focus -->
  <path class="ic" d="M1819 108.5h-7V91h19v7M1819 108.5v2h3" stroke-width="1.3"/>
  <path class="ic" d="M1822 103v-4.5h3.5M1834 98.5h3.5v4.5M1837.5 112v4h-3.5M1825.5 116H1822v-4" stroke-width="1.3"/>
  <path class="icf" d="M1829.7 102.5l3.6 2.1v4.2l-3.6 2.1-3.6-2.1v-4.2z"/>
  <!-- ruler -->
  <path class="ic" d="M1815.5 149.5h19.5v6.5h-19.5zM1815 158h20.5M1818.5 153.5v-2M1821.5 153.5v-2M1824.5 153.5v-2M1827.5 153.5v-2M1830.5 153.5v-2" stroke-width="1.1" stroke-linecap="butt"/>
  <path class="icf" d="M1811 161l4 3.5h-4z"/>
  <!-- section plane -->
  <path class="icf" d="M1820.1 191.2l9.7-7.9v19.5l-9.7 7.9z"/>
  <path d="M1811.7 199.5l8.4-6.5h18.1l-8.4 6.5z" fill="none" stroke="#e2e2e2" stroke-width="1.1" stroke-linejoin="round"/>
  <path d="M1820.6 197.4h9.2v1.6h-9.2z" fill="#535353"/>
  <!-- section box -->
  <path class="icf" d="M1822 234.5l6-5v17l-6 5z"/>
  <path class="ic" d="M1813.3 235.3h16.5v16.3h-16.3zM1820.1 230.2h16.7v16.3h-16.7zM1813.3 235.3l6.8-5.1M1829.8 235.3l7-5.1M1829.8 251.6l7-5.1M1813.3 251.6l6.8-5.1" stroke-width="1" stroke-linecap="butt"/>
  <!-- floor plan -->
  <path class="ic" d="M1811.5 278.5l4-4.5h22.5v20.5h-26.5zM1811.5 296h27M1811.5 285h26.5M1824.5 274v20.5M1828 294.5v-3.5h9" stroke-width="1.2" stroke-dasharray=""/>
  <!-- target -->
  <circle class="ic" cx="1825" cy="328.8" r="7.5" stroke-width="1.4"/>
  <circle class="icf" cx="1825" cy="328.8" r="4.2"/>
  <path class="ic" d="M1825 318.5v3M1825 336v3M1814.7 328.8h3M1832.3 328.8h3" stroke-width="1.5"/>
  <!-- flag -->
  <circle class="ic" cx="1825" cy="372.9" r="13" stroke-width="1.2"/>
  <path class="ic" d="M1819.5 380.5v-15c2.5-1.5 5-1 7.5 0s5 1.5 6.5 0v8c-1.5 1.5-4 1-6.5 0s-5-1.5-7.5 0" stroke-width="1.2"/>
  <!-- grid axes -->
  <path class="ic" d="M1812 426l26-15M1812 434l26-15M1818 418l20 10M1816 424l17 9" stroke-width="1.1"/>
  <text x="1812" y="418" font-family="Liberation Sans" font-size="5" fill="#e2e2e2">1</text>
  <text x="1821" y="412" font-family="Liberation Sans" font-size="5" fill="#e2e2e2">2</text>
  <!-- dotted boxes -->
  <rect x="1813" y="459.5" width="24" height="23" fill="none" stroke="#e2e2e2" stroke-width="1" stroke-dasharray="2 1.6"/>
  <path class="ic" d="M1825 465l5.5 3v6.5l-5.5 3-5.5-3V468zM1819.5 468l5.5 3 5.5-3M1825 471v6.5" stroke-width="1"/>
  <rect x="1813" y="503" width="24" height="23.5" fill="none" stroke="#e2e2e2" stroke-width="1" stroke-dasharray="2 1.6"/>
  <path class="icf" d="M1825 510c-4.5 0-7.5 3-8.5 5 1 2 4 5 8.5 5s7.5-3 8.5-5c-1-2-4-5-8.5-5zm0 8a3 3 0 1 1 0-6 3 3 0 0 1 0 6z"/>
  <rect x="1813" y="547" width="24" height="24" fill="none" stroke="#e2e2e2" stroke-width="1" stroke-dasharray="2 1.6"/>
  <path class="icf" d="M1825 554c-4.5 0-7.5 3-8.5 5 1 2 4 5 8.5 5s7.5-3 8.5-5c-1-2-4-5-8.5-5zm0 8a3 3 0 1 1 0-6 3 3 0 0 1 0 6z"/>
  <path d="M1817.5 552.5l14 14" stroke="#535353" stroke-width="2.5"/><path d="M1817.5 552.5l14 14" stroke="#e2e2e2" stroke-width="1.1"/>
  <rect x="1813" y="591" width="24" height="24" fill="none" stroke="#e2e2e2" stroke-width="1" stroke-dasharray="2 1.6"/>
  <rect x="1823" y="601.5" width="16" height="15.5" fill="#e2e2e2"/>
  <path d="M1827 605.5l8 8M1835 605.5l-8 8" stroke="#444" stroke-width="1.2"/>
  <!-- cube -->
  <path class="icf" d="M1815 646l5.5-3.5h14.5l-5 4z"/>
  <path class="icf" d="M1815 646.5h14.5v17l-11-3.5z"/>
  <path fill="#b8b8b8" d="M1830 646.5l5-4-1 16.5-4 4.5z"/>
  <!-- orbit -->
  <ellipse class="ic" cx="1825" cy="696" rx="11" ry="5.5" stroke-width="1.5"/>
  <ellipse class="ic" cx="1825" cy="696" rx="5" ry="12" stroke-width="1.5"/>
  <path class="ic" d="M1825 693v3l-3 3M1825 696l3 3" stroke-width="1"/>
</svg>

</body></html>
